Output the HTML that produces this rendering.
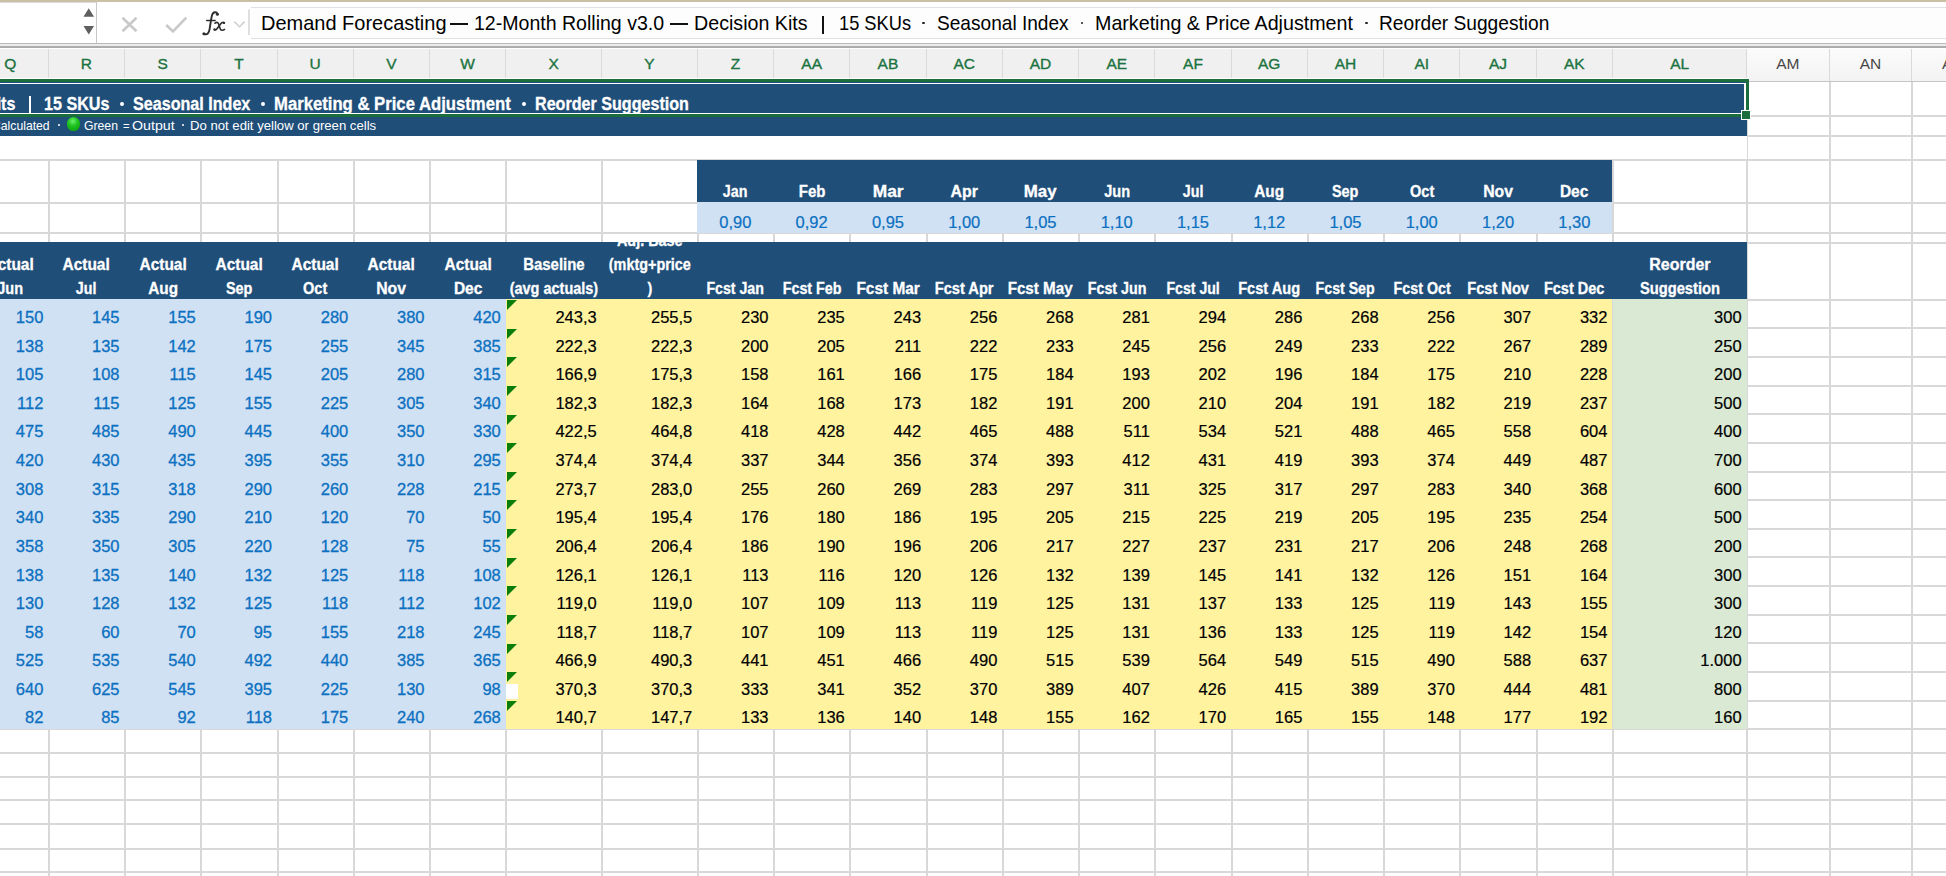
<!DOCTYPE html>
<html><head><meta charset="utf-8"><title>Demand Forecasting</title>
<style>
html,body{margin:0;padding:0;background:#fff;width:1946px;height:876px;overflow:hidden}
#root{position:absolute;left:0;top:0;width:1946px;height:876px;overflow:hidden;font-family:'Liberation Sans', sans-serif}
#root div{position:absolute;box-sizing:border-box}
.t{white-space:nowrap;overflow:visible}
#grid{position:absolute;left:0;top:0;width:1946px;height:876px;overflow:hidden}
</style></head><body><div id="root">
<div id="grid">
<div style="left:47.80px;top:81.50px;width:2.00px;height:794.50px;background:#d8d8d8;"></div>
<div style="left:124.05px;top:81.50px;width:2.00px;height:794.50px;background:#d8d8d8;"></div>
<div style="left:200.30px;top:81.50px;width:2.00px;height:794.50px;background:#d8d8d8;"></div>
<div style="left:276.55px;top:81.50px;width:2.00px;height:794.50px;background:#d8d8d8;"></div>
<div style="left:352.80px;top:81.50px;width:2.00px;height:794.50px;background:#d8d8d8;"></div>
<div style="left:429.05px;top:81.50px;width:2.00px;height:794.50px;background:#d8d8d8;"></div>
<div style="left:505.30px;top:81.50px;width:2.00px;height:794.50px;background:#d8d8d8;"></div>
<div style="left:601.20px;top:81.50px;width:2.00px;height:794.50px;background:#d8d8d8;"></div>
<div style="left:696.80px;top:81.50px;width:2.00px;height:794.50px;background:#d8d8d8;"></div>
<div style="left:773.06px;top:81.50px;width:2.00px;height:794.50px;background:#d8d8d8;"></div>
<div style="left:849.32px;top:81.50px;width:2.00px;height:794.50px;background:#d8d8d8;"></div>
<div style="left:925.58px;top:81.50px;width:2.00px;height:794.50px;background:#d8d8d8;"></div>
<div style="left:1001.84px;top:81.50px;width:2.00px;height:794.50px;background:#d8d8d8;"></div>
<div style="left:1078.10px;top:81.50px;width:2.00px;height:794.50px;background:#d8d8d8;"></div>
<div style="left:1154.36px;top:81.50px;width:2.00px;height:794.50px;background:#d8d8d8;"></div>
<div style="left:1230.62px;top:81.50px;width:2.00px;height:794.50px;background:#d8d8d8;"></div>
<div style="left:1306.88px;top:81.50px;width:2.00px;height:794.50px;background:#d8d8d8;"></div>
<div style="left:1383.14px;top:81.50px;width:2.00px;height:794.50px;background:#d8d8d8;"></div>
<div style="left:1459.40px;top:81.50px;width:2.00px;height:794.50px;background:#d8d8d8;"></div>
<div style="left:1535.66px;top:81.50px;width:2.00px;height:794.50px;background:#d8d8d8;"></div>
<div style="left:1611.92px;top:81.50px;width:2.00px;height:794.50px;background:#d8d8d8;"></div>
<div style="left:1746.10px;top:81.50px;width:2.00px;height:794.50px;background:#d8d8d8;"></div>
<div style="left:1828.70px;top:81.50px;width:2.00px;height:794.50px;background:#d8d8d8;"></div>
<div style="left:1911.30px;top:81.50px;width:2.00px;height:794.50px;background:#d8d8d8;"></div>
<div style="left:1993.90px;top:81.50px;width:2.00px;height:794.50px;background:#d8d8d8;"></div>
<div style="left:0.00px;top:114.60px;width:1946.00px;height:2.00px;background:#d8d8d8;"></div>
<div style="left:0.00px;top:135.40px;width:1946.00px;height:2.00px;background:#d8d8d8;"></div>
<div style="left:0.00px;top:158.70px;width:1946.00px;height:2.00px;background:#d8d8d8;"></div>
<div style="left:0.00px;top:201.90px;width:1946.00px;height:2.00px;background:#d8d8d8;"></div>
<div style="left:0.00px;top:232.10px;width:1946.00px;height:2.00px;background:#d8d8d8;"></div>
<div style="left:0.00px;top:241.70px;width:1946.00px;height:2.00px;background:#d8d8d8;"></div>
<div style="left:0.00px;top:298.80px;width:1946.00px;height:2.00px;background:#d8d8d8;"></div>
<div style="left:0.00px;top:327.40px;width:1946.00px;height:2.00px;background:#d8d8d8;"></div>
<div style="left:0.00px;top:356.03px;width:1946.00px;height:2.00px;background:#d8d8d8;"></div>
<div style="left:0.00px;top:384.66px;width:1946.00px;height:2.00px;background:#d8d8d8;"></div>
<div style="left:0.00px;top:413.29px;width:1946.00px;height:2.00px;background:#d8d8d8;"></div>
<div style="left:0.00px;top:441.92px;width:1946.00px;height:2.00px;background:#d8d8d8;"></div>
<div style="left:0.00px;top:470.55px;width:1946.00px;height:2.00px;background:#d8d8d8;"></div>
<div style="left:0.00px;top:499.18px;width:1946.00px;height:2.00px;background:#d8d8d8;"></div>
<div style="left:0.00px;top:527.81px;width:1946.00px;height:2.00px;background:#d8d8d8;"></div>
<div style="left:0.00px;top:556.44px;width:1946.00px;height:2.00px;background:#d8d8d8;"></div>
<div style="left:0.00px;top:585.07px;width:1946.00px;height:2.00px;background:#d8d8d8;"></div>
<div style="left:0.00px;top:613.70px;width:1946.00px;height:2.00px;background:#d8d8d8;"></div>
<div style="left:0.00px;top:642.33px;width:1946.00px;height:2.00px;background:#d8d8d8;"></div>
<div style="left:0.00px;top:670.96px;width:1946.00px;height:2.00px;background:#d8d8d8;"></div>
<div style="left:0.00px;top:699.59px;width:1946.00px;height:2.00px;background:#d8d8d8;"></div>
<div style="left:0.00px;top:728.40px;width:1946.00px;height:2.00px;background:#d8d8d8;"></div>
<div style="left:0.00px;top:751.90px;width:1946.00px;height:2.00px;background:#d8d8d8;"></div>
<div style="left:0.00px;top:775.50px;width:1946.00px;height:2.00px;background:#d8d8d8;"></div>
<div style="left:0.00px;top:799.40px;width:1946.00px;height:2.00px;background:#d8d8d8;"></div>
<div style="left:0.00px;top:823.30px;width:1946.00px;height:2.00px;background:#d8d8d8;"></div>
<div style="left:0.00px;top:847.50px;width:1946.00px;height:2.00px;background:#d8d8d8;"></div>
<div style="left:0.00px;top:870.80px;width:1946.00px;height:2.00px;background:#d8d8d8;"></div>
<div style="left:-27.95px;top:81.50px;width:1774.55px;height:54.80px;background:#1f4e79;"></div>
<div style="left:-27.95px;top:136.30px;width:1774.55px;height:23.20px;background:#ffffff;"></div>
<div style="left:697.30px;top:159.50px;width:915.12px;height:42.90px;background:#1f4e79;"></div>
<div style="left:697.30px;top:202.40px;width:915.12px;height:30.30px;background:#d0e1f3;"></div>
<div style="left:-27.95px;top:241.80px;width:1774.55px;height:57.00px;background:#1f4e79;"></div>
<div style="left:-27.95px;top:298.80px;width:533.75px;height:430.70px;background:#d0e1f3;"></div>
<div style="left:505.80px;top:298.80px;width:1106.62px;height:430.70px;background:#fff3a0;"></div>
<div style="left:1612.70px;top:298.80px;width:133.90px;height:430.70px;background:#d9e9d3;"></div>
<div style="left:28.90px;top:96.30px;width:2.20px;height:16.90px;background:#fff;"></div>
<div style="left:119.80px;top:101.8px;width:3.8px;height:3.8px;border-radius:50%;background:#fff"></div>
<div style="left:261.10px;top:101.8px;width:3.8px;height:3.8px;border-radius:50%;background:#fff"></div>
<div style="left:521.80px;top:101.8px;width:3.8px;height:3.8px;border-radius:50%;background:#fff"></div>
<div style="left:57.50px;top:124.1px;width:2.2px;height:2.2px;border-radius:50%;background:#fff"></div>
<div style="left:182.00px;top:124.1px;width:2.2px;height:2.2px;border-radius:50%;background:#fff"></div>
<div style="left:66.9px;top:117.4px;width:13.6px;height:13.2px;border-radius:50%;background:radial-gradient(circle at 45% 30%, #6cf06c 0%, #1fc21f 40%, #0a9a0a 100%)"></div>
<div class="t" style="left:657.30px;width:156.26px;text-align:center;top:176.56px;line-height:30px;font-size:16px;color:#fff;font-weight:bold;-webkit-text-stroke:0.3px #fff;transform:scaleX(0.8919);transform-origin:50% 0;">Jan</div>
<div class="t" style="left:657.30px;width:156.26px;text-align:center;top:206.78px;line-height:30px;font-size:16.5px;color:#0b70c1;-webkit-text-stroke:0.2px #0b70c1;">0,90</div>
<div class="t" style="left:733.56px;width:156.26px;text-align:center;top:176.56px;line-height:30px;font-size:16px;color:#fff;font-weight:bold;-webkit-text-stroke:0.3px #fff;transform:scaleX(0.9396);transform-origin:50% 0;">Feb</div>
<div class="t" style="left:733.56px;width:156.26px;text-align:center;top:206.78px;line-height:30px;font-size:16.5px;color:#0b70c1;-webkit-text-stroke:0.2px #0b70c1;">0,92</div>
<div class="t" style="left:809.82px;width:156.26px;text-align:center;top:176.56px;line-height:30px;font-size:16px;color:#fff;font-weight:bold;-webkit-text-stroke:0.3px #fff;transform:scaleX(1.0835);transform-origin:50% 0;">Mar</div>
<div class="t" style="left:809.82px;width:156.26px;text-align:center;top:206.78px;line-height:30px;font-size:16.5px;color:#0b70c1;-webkit-text-stroke:0.2px #0b70c1;">0,95</div>
<div class="t" style="left:886.08px;width:156.26px;text-align:center;top:176.56px;line-height:30px;font-size:16px;color:#fff;font-weight:bold;-webkit-text-stroke:0.3px #fff;transform:scaleX(0.9953);transform-origin:50% 0;">Apr</div>
<div class="t" style="left:886.08px;width:156.26px;text-align:center;top:206.78px;line-height:30px;font-size:16.5px;color:#0b70c1;-webkit-text-stroke:0.2px #0b70c1;">1,00</div>
<div class="t" style="left:962.34px;width:156.26px;text-align:center;top:176.56px;line-height:30px;font-size:16px;color:#fff;font-weight:bold;-webkit-text-stroke:0.3px #fff;transform:scaleX(1.0554);transform-origin:50% 0;">May</div>
<div class="t" style="left:962.34px;width:156.26px;text-align:center;top:206.78px;line-height:30px;font-size:16.5px;color:#0b70c1;-webkit-text-stroke:0.2px #0b70c1;">1,05</div>
<div class="t" style="left:1038.60px;width:156.26px;text-align:center;top:176.56px;line-height:30px;font-size:16px;color:#fff;font-weight:bold;-webkit-text-stroke:0.3px #fff;transform:scaleX(0.9071);transform-origin:50% 0;">Jun</div>
<div class="t" style="left:1038.60px;width:156.26px;text-align:center;top:206.78px;line-height:30px;font-size:16.5px;color:#0b70c1;-webkit-text-stroke:0.2px #0b70c1;">1,10</div>
<div class="t" style="left:1114.86px;width:156.26px;text-align:center;top:176.56px;line-height:30px;font-size:16px;color:#fff;font-weight:bold;-webkit-text-stroke:0.3px #fff;transform:scaleX(0.8866);transform-origin:50% 0;">Jul</div>
<div class="t" style="left:1114.86px;width:156.26px;text-align:center;top:206.78px;line-height:30px;font-size:16.5px;color:#0b70c1;-webkit-text-stroke:0.2px #0b70c1;">1,15</div>
<div class="t" style="left:1191.12px;width:156.26px;text-align:center;top:176.56px;line-height:30px;font-size:16px;color:#fff;font-weight:bold;-webkit-text-stroke:0.3px #fff;transform:scaleX(0.9562);transform-origin:50% 0;">Aug</div>
<div class="t" style="left:1191.12px;width:156.26px;text-align:center;top:206.78px;line-height:30px;font-size:16.5px;color:#0b70c1;-webkit-text-stroke:0.2px #0b70c1;">1,12</div>
<div class="t" style="left:1267.38px;width:156.26px;text-align:center;top:176.56px;line-height:30px;font-size:16px;color:#fff;font-weight:bold;-webkit-text-stroke:0.3px #fff;transform:scaleX(0.9029);transform-origin:50% 0;">Sep</div>
<div class="t" style="left:1267.38px;width:156.26px;text-align:center;top:206.78px;line-height:30px;font-size:16.5px;color:#0b70c1;-webkit-text-stroke:0.2px #0b70c1;">1,05</div>
<div class="t" style="left:1343.64px;width:156.26px;text-align:center;top:176.56px;line-height:30px;font-size:16px;color:#fff;font-weight:bold;-webkit-text-stroke:0.3px #fff;transform:scaleX(0.907);transform-origin:50% 0;">Oct</div>
<div class="t" style="left:1343.64px;width:156.26px;text-align:center;top:206.78px;line-height:30px;font-size:16.5px;color:#0b70c1;-webkit-text-stroke:0.2px #0b70c1;">1,00</div>
<div class="t" style="left:1419.90px;width:156.26px;text-align:center;top:176.56px;line-height:30px;font-size:16px;color:#fff;font-weight:bold;-webkit-text-stroke:0.3px #fff;transform:scaleX(0.9854);transform-origin:50% 0;">Nov</div>
<div class="t" style="left:1419.90px;width:156.26px;text-align:center;top:206.78px;line-height:30px;font-size:16.5px;color:#0b70c1;-webkit-text-stroke:0.2px #0b70c1;">1,20</div>
<div class="t" style="left:1496.16px;width:156.26px;text-align:center;top:176.56px;line-height:30px;font-size:16px;color:#fff;font-weight:bold;-webkit-text-stroke:0.3px #fff;transform:scaleX(0.97);transform-origin:50% 0;">Dec</div>
<div class="t" style="left:1496.16px;width:156.26px;text-align:center;top:206.78px;line-height:30px;font-size:16.5px;color:#0b70c1;-webkit-text-stroke:0.2px #0b70c1;">1,30</div>
<div style="left:0;top:241.8px;width:1946px;height:57px;overflow:hidden"><div class="t" style="left:-67.95px;width:156.25px;text-align:center;top:7.76px;line-height:30px;font-size:16px;color:#fff;font-weight:bold;-webkit-text-stroke:0.3px #fff;transform:scaleX(0.9659);transform-origin:50% 0;">Actual</div><div class="t" style="left:-67.95px;width:156.25px;text-align:center;top:31.76px;line-height:30px;font-size:16px;color:#fff;font-weight:bold;-webkit-text-stroke:0.3px #fff;transform:scaleX(0.9071);transform-origin:50% 0;">Jun</div><div class="t" style="left:8.30px;width:156.25px;text-align:center;top:7.76px;line-height:30px;font-size:16px;color:#fff;font-weight:bold;-webkit-text-stroke:0.3px #fff;transform:scaleX(0.9659);transform-origin:50% 0;">Actual</div><div class="t" style="left:8.30px;width:156.25px;text-align:center;top:31.76px;line-height:30px;font-size:16px;color:#fff;font-weight:bold;-webkit-text-stroke:0.3px #fff;transform:scaleX(0.8866);transform-origin:50% 0;">Jul</div><div class="t" style="left:84.55px;width:156.25px;text-align:center;top:7.76px;line-height:30px;font-size:16px;color:#fff;font-weight:bold;-webkit-text-stroke:0.3px #fff;transform:scaleX(0.9659);transform-origin:50% 0;">Actual</div><div class="t" style="left:84.55px;width:156.25px;text-align:center;top:31.76px;line-height:30px;font-size:16px;color:#fff;font-weight:bold;-webkit-text-stroke:0.3px #fff;transform:scaleX(0.9562);transform-origin:50% 0;">Aug</div><div class="t" style="left:160.80px;width:156.25px;text-align:center;top:7.76px;line-height:30px;font-size:16px;color:#fff;font-weight:bold;-webkit-text-stroke:0.3px #fff;transform:scaleX(0.9659);transform-origin:50% 0;">Actual</div><div class="t" style="left:160.80px;width:156.25px;text-align:center;top:31.76px;line-height:30px;font-size:16px;color:#fff;font-weight:bold;-webkit-text-stroke:0.3px #fff;transform:scaleX(0.9029);transform-origin:50% 0;">Sep</div><div class="t" style="left:237.05px;width:156.25px;text-align:center;top:7.76px;line-height:30px;font-size:16px;color:#fff;font-weight:bold;-webkit-text-stroke:0.3px #fff;transform:scaleX(0.9659);transform-origin:50% 0;">Actual</div><div class="t" style="left:237.05px;width:156.25px;text-align:center;top:31.76px;line-height:30px;font-size:16px;color:#fff;font-weight:bold;-webkit-text-stroke:0.3px #fff;transform:scaleX(0.907);transform-origin:50% 0;">Oct</div><div class="t" style="left:313.30px;width:156.25px;text-align:center;top:7.76px;line-height:30px;font-size:16px;color:#fff;font-weight:bold;-webkit-text-stroke:0.3px #fff;transform:scaleX(0.9659);transform-origin:50% 0;">Actual</div><div class="t" style="left:313.30px;width:156.25px;text-align:center;top:31.76px;line-height:30px;font-size:16px;color:#fff;font-weight:bold;-webkit-text-stroke:0.3px #fff;transform:scaleX(0.9854);transform-origin:50% 0;">Nov</div><div class="t" style="left:389.55px;width:156.25px;text-align:center;top:7.76px;line-height:30px;font-size:16px;color:#fff;font-weight:bold;-webkit-text-stroke:0.3px #fff;transform:scaleX(0.9659);transform-origin:50% 0;">Actual</div><div class="t" style="left:389.55px;width:156.25px;text-align:center;top:31.76px;line-height:30px;font-size:16px;color:#fff;font-weight:bold;-webkit-text-stroke:0.3px #fff;transform:scaleX(0.97);transform-origin:50% 0;">Dec</div><div class="t" style="left:465.80px;width:175.90px;text-align:center;top:7.76px;line-height:30px;font-size:16px;color:#fff;font-weight:bold;-webkit-text-stroke:0.3px #fff;transform:scaleX(0.9335);transform-origin:50% 0;">Baseline</div><div class="t" style="left:465.80px;width:175.90px;text-align:center;top:31.76px;line-height:30px;font-size:16px;color:#fff;font-weight:bold;-webkit-text-stroke:0.3px #fff;transform:scaleX(0.9048);transform-origin:50% 0;">(avg actuals)</div><div class="t" style="left:561.70px;width:175.60px;text-align:center;top:-16.24px;line-height:30px;font-size:16px;color:#fff;font-weight:bold;-webkit-text-stroke:0.3px #fff;transform:scaleX(0.9);transform-origin:50% 0;">Adj. Base</div><div class="t" style="left:561.70px;width:175.60px;text-align:center;top:7.76px;line-height:30px;font-size:16px;color:#fff;font-weight:bold;-webkit-text-stroke:0.3px #fff;transform:scaleX(0.9);transform-origin:50% 0;">(mktg+price</div><div class="t" style="left:561.70px;width:175.60px;text-align:center;top:31.76px;line-height:30px;font-size:16px;color:#fff;font-weight:bold;-webkit-text-stroke:0.3px #fff;transform:scaleX(0.9);transform-origin:50% 0;">)</div><div class="t" style="left:657.30px;width:156.26px;text-align:center;top:31.76px;line-height:30px;font-size:16px;color:#fff;font-weight:bold;-webkit-text-stroke:0.3px #fff;transform:scaleX(0.8853);transform-origin:50% 0;">Fcst Jan</div><div class="t" style="left:733.56px;width:156.26px;text-align:center;top:31.76px;line-height:30px;font-size:16px;color:#fff;font-weight:bold;-webkit-text-stroke:0.3px #fff;transform:scaleX(0.8952);transform-origin:50% 0;">Fcst Feb</div><div class="t" style="left:809.82px;width:156.26px;text-align:center;top:31.76px;line-height:30px;font-size:16px;color:#fff;font-weight:bold;-webkit-text-stroke:0.3px #fff;transform:scaleX(0.9633);transform-origin:50% 0;">Fcst Mar</div><div class="t" style="left:886.08px;width:156.26px;text-align:center;top:31.76px;line-height:30px;font-size:16px;color:#fff;font-weight:bold;-webkit-text-stroke:0.3px #fff;transform:scaleX(0.9156);transform-origin:50% 0;">Fcst Apr</div><div class="t" style="left:962.34px;width:156.26px;text-align:center;top:31.76px;line-height:30px;font-size:16px;color:#fff;font-weight:bold;-webkit-text-stroke:0.3px #fff;transform:scaleX(0.9486);transform-origin:50% 0;">Fcst May</div><div class="t" style="left:1038.60px;width:156.26px;text-align:center;top:31.76px;line-height:30px;font-size:16px;color:#fff;font-weight:bold;-webkit-text-stroke:0.3px #fff;transform:scaleX(0.8935);transform-origin:50% 0;">Fcst Jun</div><div class="t" style="left:1114.86px;width:156.26px;text-align:center;top:31.76px;line-height:30px;font-size:16px;color:#fff;font-weight:bold;-webkit-text-stroke:0.3px #fff;transform:scaleX(0.8811);transform-origin:50% 0;">Fcst Jul</div><div class="t" style="left:1191.12px;width:156.26px;text-align:center;top:31.76px;line-height:30px;font-size:16px;color:#fff;font-weight:bold;-webkit-text-stroke:0.3px #fff;transform:scaleX(0.9119);transform-origin:50% 0;">Fcst Aug</div><div class="t" style="left:1267.38px;width:156.26px;text-align:center;top:31.76px;line-height:30px;font-size:16px;color:#fff;font-weight:bold;-webkit-text-stroke:0.3px #fff;transform:scaleX(0.886);transform-origin:50% 0;">Fcst Sep</div><div class="t" style="left:1343.64px;width:156.26px;text-align:center;top:31.76px;line-height:30px;font-size:16px;color:#fff;font-weight:bold;-webkit-text-stroke:0.3px #fff;transform:scaleX(0.8919);transform-origin:50% 0;">Fcst Oct</div><div class="t" style="left:1419.90px;width:156.26px;text-align:center;top:31.76px;line-height:30px;font-size:16px;color:#fff;font-weight:bold;-webkit-text-stroke:0.3px #fff;transform:scaleX(0.9134);transform-origin:50% 0;">Fcst Nov</div><div class="t" style="left:1496.16px;width:156.26px;text-align:center;top:31.76px;line-height:30px;font-size:16px;color:#fff;font-weight:bold;-webkit-text-stroke:0.3px #fff;transform:scaleX(0.9058);transform-origin:50% 0;">Fcst Dec</div><div class="t" style="left:1572.70px;width:213.90px;text-align:center;top:7.76px;line-height:30px;font-size:16px;color:#fff;font-weight:bold;-webkit-text-stroke:0.3px #fff;transform:scaleX(0.9979);transform-origin:50% 0;">Reorder</div><div class="t" style="left:1572.70px;width:213.90px;text-align:center;top:31.76px;line-height:30px;font-size:16px;color:#fff;font-weight:bold;-webkit-text-stroke:0.3px #fff;transform:scaleX(0.9197);transform-origin:50% 0;">Suggestion</div></div>
<div class="t" style="left:-27.95px;width:71.25px;text-align:right;top:301.91px;line-height:30px;font-size:16.5px;color:#0b70c1;-webkit-text-stroke:0.3px #0b70c1;">150</div>
<div class="t" style="left:48.30px;width:71.25px;text-align:right;top:301.91px;line-height:30px;font-size:16.5px;color:#0b70c1;-webkit-text-stroke:0.3px #0b70c1;">145</div>
<div class="t" style="left:124.55px;width:71.25px;text-align:right;top:301.91px;line-height:30px;font-size:16.5px;color:#0b70c1;-webkit-text-stroke:0.3px #0b70c1;">155</div>
<div class="t" style="left:200.80px;width:71.25px;text-align:right;top:301.91px;line-height:30px;font-size:16.5px;color:#0b70c1;-webkit-text-stroke:0.3px #0b70c1;">190</div>
<div class="t" style="left:277.05px;width:71.25px;text-align:right;top:301.91px;line-height:30px;font-size:16.5px;color:#0b70c1;-webkit-text-stroke:0.3px #0b70c1;">280</div>
<div class="t" style="left:353.30px;width:71.25px;text-align:right;top:301.91px;line-height:30px;font-size:16.5px;color:#0b70c1;-webkit-text-stroke:0.3px #0b70c1;">380</div>
<div class="t" style="left:429.55px;width:71.25px;text-align:right;top:301.91px;line-height:30px;font-size:16.5px;color:#0b70c1;-webkit-text-stroke:0.3px #0b70c1;">420</div>
<div class="t" style="left:505.80px;width:90.90px;text-align:right;top:301.91px;line-height:30px;font-size:16.5px;color:#000;-webkit-text-stroke:0.2px #000;">243,3</div>
<div class="t" style="left:601.70px;width:90.60px;text-align:right;top:301.91px;line-height:30px;font-size:16.5px;color:#000;-webkit-text-stroke:0.2px #000;">255,5</div>
<div class="t" style="left:697.30px;width:71.26px;text-align:right;top:301.91px;line-height:30px;font-size:16.5px;color:#000;-webkit-text-stroke:0.2px #000;">230</div>
<div class="t" style="left:773.56px;width:71.26px;text-align:right;top:301.91px;line-height:30px;font-size:16.5px;color:#000;-webkit-text-stroke:0.2px #000;">235</div>
<div class="t" style="left:849.82px;width:71.26px;text-align:right;top:301.91px;line-height:30px;font-size:16.5px;color:#000;-webkit-text-stroke:0.2px #000;">243</div>
<div class="t" style="left:926.08px;width:71.26px;text-align:right;top:301.91px;line-height:30px;font-size:16.5px;color:#000;-webkit-text-stroke:0.2px #000;">256</div>
<div class="t" style="left:1002.34px;width:71.26px;text-align:right;top:301.91px;line-height:30px;font-size:16.5px;color:#000;-webkit-text-stroke:0.2px #000;">268</div>
<div class="t" style="left:1078.60px;width:71.26px;text-align:right;top:301.91px;line-height:30px;font-size:16.5px;color:#000;-webkit-text-stroke:0.2px #000;">281</div>
<div class="t" style="left:1154.86px;width:71.26px;text-align:right;top:301.91px;line-height:30px;font-size:16.5px;color:#000;-webkit-text-stroke:0.2px #000;">294</div>
<div class="t" style="left:1231.12px;width:71.26px;text-align:right;top:301.91px;line-height:30px;font-size:16.5px;color:#000;-webkit-text-stroke:0.2px #000;">286</div>
<div class="t" style="left:1307.38px;width:71.26px;text-align:right;top:301.91px;line-height:30px;font-size:16.5px;color:#000;-webkit-text-stroke:0.2px #000;">268</div>
<div class="t" style="left:1383.64px;width:71.26px;text-align:right;top:301.91px;line-height:30px;font-size:16.5px;color:#000;-webkit-text-stroke:0.2px #000;">256</div>
<div class="t" style="left:1459.90px;width:71.26px;text-align:right;top:301.91px;line-height:30px;font-size:16.5px;color:#000;-webkit-text-stroke:0.2px #000;">307</div>
<div class="t" style="left:1536.16px;width:71.26px;text-align:right;top:301.91px;line-height:30px;font-size:16.5px;color:#000;-webkit-text-stroke:0.2px #000;">332</div>
<div class="t" style="left:1612.70px;width:128.90px;text-align:right;top:301.91px;line-height:30px;font-size:16.5px;color:#000;-webkit-text-stroke:0.2px #000;">300</div>
<div style="left:507.10px;top:300.00px;width:0;height:0;border-top:10px solid #0a7d0a;border-right:10px solid transparent"></div>
<div class="t" style="left:-27.95px;width:71.25px;text-align:right;top:330.54px;line-height:30px;font-size:16.5px;color:#0b70c1;-webkit-text-stroke:0.3px #0b70c1;">138</div>
<div class="t" style="left:48.30px;width:71.25px;text-align:right;top:330.54px;line-height:30px;font-size:16.5px;color:#0b70c1;-webkit-text-stroke:0.3px #0b70c1;">135</div>
<div class="t" style="left:124.55px;width:71.25px;text-align:right;top:330.54px;line-height:30px;font-size:16.5px;color:#0b70c1;-webkit-text-stroke:0.3px #0b70c1;">142</div>
<div class="t" style="left:200.80px;width:71.25px;text-align:right;top:330.54px;line-height:30px;font-size:16.5px;color:#0b70c1;-webkit-text-stroke:0.3px #0b70c1;">175</div>
<div class="t" style="left:277.05px;width:71.25px;text-align:right;top:330.54px;line-height:30px;font-size:16.5px;color:#0b70c1;-webkit-text-stroke:0.3px #0b70c1;">255</div>
<div class="t" style="left:353.30px;width:71.25px;text-align:right;top:330.54px;line-height:30px;font-size:16.5px;color:#0b70c1;-webkit-text-stroke:0.3px #0b70c1;">345</div>
<div class="t" style="left:429.55px;width:71.25px;text-align:right;top:330.54px;line-height:30px;font-size:16.5px;color:#0b70c1;-webkit-text-stroke:0.3px #0b70c1;">385</div>
<div class="t" style="left:505.80px;width:90.90px;text-align:right;top:330.54px;line-height:30px;font-size:16.5px;color:#000;-webkit-text-stroke:0.2px #000;">222,3</div>
<div class="t" style="left:601.70px;width:90.60px;text-align:right;top:330.54px;line-height:30px;font-size:16.5px;color:#000;-webkit-text-stroke:0.2px #000;">222,3</div>
<div class="t" style="left:697.30px;width:71.26px;text-align:right;top:330.54px;line-height:30px;font-size:16.5px;color:#000;-webkit-text-stroke:0.2px #000;">200</div>
<div class="t" style="left:773.56px;width:71.26px;text-align:right;top:330.54px;line-height:30px;font-size:16.5px;color:#000;-webkit-text-stroke:0.2px #000;">205</div>
<div class="t" style="left:849.82px;width:71.26px;text-align:right;top:330.54px;line-height:30px;font-size:16.5px;color:#000;-webkit-text-stroke:0.2px #000;">211</div>
<div class="t" style="left:926.08px;width:71.26px;text-align:right;top:330.54px;line-height:30px;font-size:16.5px;color:#000;-webkit-text-stroke:0.2px #000;">222</div>
<div class="t" style="left:1002.34px;width:71.26px;text-align:right;top:330.54px;line-height:30px;font-size:16.5px;color:#000;-webkit-text-stroke:0.2px #000;">233</div>
<div class="t" style="left:1078.60px;width:71.26px;text-align:right;top:330.54px;line-height:30px;font-size:16.5px;color:#000;-webkit-text-stroke:0.2px #000;">245</div>
<div class="t" style="left:1154.86px;width:71.26px;text-align:right;top:330.54px;line-height:30px;font-size:16.5px;color:#000;-webkit-text-stroke:0.2px #000;">256</div>
<div class="t" style="left:1231.12px;width:71.26px;text-align:right;top:330.54px;line-height:30px;font-size:16.5px;color:#000;-webkit-text-stroke:0.2px #000;">249</div>
<div class="t" style="left:1307.38px;width:71.26px;text-align:right;top:330.54px;line-height:30px;font-size:16.5px;color:#000;-webkit-text-stroke:0.2px #000;">233</div>
<div class="t" style="left:1383.64px;width:71.26px;text-align:right;top:330.54px;line-height:30px;font-size:16.5px;color:#000;-webkit-text-stroke:0.2px #000;">222</div>
<div class="t" style="left:1459.90px;width:71.26px;text-align:right;top:330.54px;line-height:30px;font-size:16.5px;color:#000;-webkit-text-stroke:0.2px #000;">267</div>
<div class="t" style="left:1536.16px;width:71.26px;text-align:right;top:330.54px;line-height:30px;font-size:16.5px;color:#000;-webkit-text-stroke:0.2px #000;">289</div>
<div class="t" style="left:1612.70px;width:128.90px;text-align:right;top:330.54px;line-height:30px;font-size:16.5px;color:#000;-webkit-text-stroke:0.2px #000;">250</div>
<div style="left:507.10px;top:328.63px;width:0;height:0;border-top:10px solid #0a7d0a;border-right:10px solid transparent"></div>
<div class="t" style="left:-27.95px;width:71.25px;text-align:right;top:359.17px;line-height:30px;font-size:16.5px;color:#0b70c1;-webkit-text-stroke:0.3px #0b70c1;">105</div>
<div class="t" style="left:48.30px;width:71.25px;text-align:right;top:359.17px;line-height:30px;font-size:16.5px;color:#0b70c1;-webkit-text-stroke:0.3px #0b70c1;">108</div>
<div class="t" style="left:124.55px;width:71.25px;text-align:right;top:359.17px;line-height:30px;font-size:16.5px;color:#0b70c1;-webkit-text-stroke:0.3px #0b70c1;">115</div>
<div class="t" style="left:200.80px;width:71.25px;text-align:right;top:359.17px;line-height:30px;font-size:16.5px;color:#0b70c1;-webkit-text-stroke:0.3px #0b70c1;">145</div>
<div class="t" style="left:277.05px;width:71.25px;text-align:right;top:359.17px;line-height:30px;font-size:16.5px;color:#0b70c1;-webkit-text-stroke:0.3px #0b70c1;">205</div>
<div class="t" style="left:353.30px;width:71.25px;text-align:right;top:359.17px;line-height:30px;font-size:16.5px;color:#0b70c1;-webkit-text-stroke:0.3px #0b70c1;">280</div>
<div class="t" style="left:429.55px;width:71.25px;text-align:right;top:359.17px;line-height:30px;font-size:16.5px;color:#0b70c1;-webkit-text-stroke:0.3px #0b70c1;">315</div>
<div class="t" style="left:505.80px;width:90.90px;text-align:right;top:359.17px;line-height:30px;font-size:16.5px;color:#000;-webkit-text-stroke:0.2px #000;">166,9</div>
<div class="t" style="left:601.70px;width:90.60px;text-align:right;top:359.17px;line-height:30px;font-size:16.5px;color:#000;-webkit-text-stroke:0.2px #000;">175,3</div>
<div class="t" style="left:697.30px;width:71.26px;text-align:right;top:359.17px;line-height:30px;font-size:16.5px;color:#000;-webkit-text-stroke:0.2px #000;">158</div>
<div class="t" style="left:773.56px;width:71.26px;text-align:right;top:359.17px;line-height:30px;font-size:16.5px;color:#000;-webkit-text-stroke:0.2px #000;">161</div>
<div class="t" style="left:849.82px;width:71.26px;text-align:right;top:359.17px;line-height:30px;font-size:16.5px;color:#000;-webkit-text-stroke:0.2px #000;">166</div>
<div class="t" style="left:926.08px;width:71.26px;text-align:right;top:359.17px;line-height:30px;font-size:16.5px;color:#000;-webkit-text-stroke:0.2px #000;">175</div>
<div class="t" style="left:1002.34px;width:71.26px;text-align:right;top:359.17px;line-height:30px;font-size:16.5px;color:#000;-webkit-text-stroke:0.2px #000;">184</div>
<div class="t" style="left:1078.60px;width:71.26px;text-align:right;top:359.17px;line-height:30px;font-size:16.5px;color:#000;-webkit-text-stroke:0.2px #000;">193</div>
<div class="t" style="left:1154.86px;width:71.26px;text-align:right;top:359.17px;line-height:30px;font-size:16.5px;color:#000;-webkit-text-stroke:0.2px #000;">202</div>
<div class="t" style="left:1231.12px;width:71.26px;text-align:right;top:359.17px;line-height:30px;font-size:16.5px;color:#000;-webkit-text-stroke:0.2px #000;">196</div>
<div class="t" style="left:1307.38px;width:71.26px;text-align:right;top:359.17px;line-height:30px;font-size:16.5px;color:#000;-webkit-text-stroke:0.2px #000;">184</div>
<div class="t" style="left:1383.64px;width:71.26px;text-align:right;top:359.17px;line-height:30px;font-size:16.5px;color:#000;-webkit-text-stroke:0.2px #000;">175</div>
<div class="t" style="left:1459.90px;width:71.26px;text-align:right;top:359.17px;line-height:30px;font-size:16.5px;color:#000;-webkit-text-stroke:0.2px #000;">210</div>
<div class="t" style="left:1536.16px;width:71.26px;text-align:right;top:359.17px;line-height:30px;font-size:16.5px;color:#000;-webkit-text-stroke:0.2px #000;">228</div>
<div class="t" style="left:1612.70px;width:128.90px;text-align:right;top:359.17px;line-height:30px;font-size:16.5px;color:#000;-webkit-text-stroke:0.2px #000;">200</div>
<div style="left:507.10px;top:357.26px;width:0;height:0;border-top:10px solid #0a7d0a;border-right:10px solid transparent"></div>
<div class="t" style="left:-27.95px;width:71.25px;text-align:right;top:387.80px;line-height:30px;font-size:16.5px;color:#0b70c1;-webkit-text-stroke:0.3px #0b70c1;">112</div>
<div class="t" style="left:48.30px;width:71.25px;text-align:right;top:387.80px;line-height:30px;font-size:16.5px;color:#0b70c1;-webkit-text-stroke:0.3px #0b70c1;">115</div>
<div class="t" style="left:124.55px;width:71.25px;text-align:right;top:387.80px;line-height:30px;font-size:16.5px;color:#0b70c1;-webkit-text-stroke:0.3px #0b70c1;">125</div>
<div class="t" style="left:200.80px;width:71.25px;text-align:right;top:387.80px;line-height:30px;font-size:16.5px;color:#0b70c1;-webkit-text-stroke:0.3px #0b70c1;">155</div>
<div class="t" style="left:277.05px;width:71.25px;text-align:right;top:387.80px;line-height:30px;font-size:16.5px;color:#0b70c1;-webkit-text-stroke:0.3px #0b70c1;">225</div>
<div class="t" style="left:353.30px;width:71.25px;text-align:right;top:387.80px;line-height:30px;font-size:16.5px;color:#0b70c1;-webkit-text-stroke:0.3px #0b70c1;">305</div>
<div class="t" style="left:429.55px;width:71.25px;text-align:right;top:387.80px;line-height:30px;font-size:16.5px;color:#0b70c1;-webkit-text-stroke:0.3px #0b70c1;">340</div>
<div class="t" style="left:505.80px;width:90.90px;text-align:right;top:387.80px;line-height:30px;font-size:16.5px;color:#000;-webkit-text-stroke:0.2px #000;">182,3</div>
<div class="t" style="left:601.70px;width:90.60px;text-align:right;top:387.80px;line-height:30px;font-size:16.5px;color:#000;-webkit-text-stroke:0.2px #000;">182,3</div>
<div class="t" style="left:697.30px;width:71.26px;text-align:right;top:387.80px;line-height:30px;font-size:16.5px;color:#000;-webkit-text-stroke:0.2px #000;">164</div>
<div class="t" style="left:773.56px;width:71.26px;text-align:right;top:387.80px;line-height:30px;font-size:16.5px;color:#000;-webkit-text-stroke:0.2px #000;">168</div>
<div class="t" style="left:849.82px;width:71.26px;text-align:right;top:387.80px;line-height:30px;font-size:16.5px;color:#000;-webkit-text-stroke:0.2px #000;">173</div>
<div class="t" style="left:926.08px;width:71.26px;text-align:right;top:387.80px;line-height:30px;font-size:16.5px;color:#000;-webkit-text-stroke:0.2px #000;">182</div>
<div class="t" style="left:1002.34px;width:71.26px;text-align:right;top:387.80px;line-height:30px;font-size:16.5px;color:#000;-webkit-text-stroke:0.2px #000;">191</div>
<div class="t" style="left:1078.60px;width:71.26px;text-align:right;top:387.80px;line-height:30px;font-size:16.5px;color:#000;-webkit-text-stroke:0.2px #000;">200</div>
<div class="t" style="left:1154.86px;width:71.26px;text-align:right;top:387.80px;line-height:30px;font-size:16.5px;color:#000;-webkit-text-stroke:0.2px #000;">210</div>
<div class="t" style="left:1231.12px;width:71.26px;text-align:right;top:387.80px;line-height:30px;font-size:16.5px;color:#000;-webkit-text-stroke:0.2px #000;">204</div>
<div class="t" style="left:1307.38px;width:71.26px;text-align:right;top:387.80px;line-height:30px;font-size:16.5px;color:#000;-webkit-text-stroke:0.2px #000;">191</div>
<div class="t" style="left:1383.64px;width:71.26px;text-align:right;top:387.80px;line-height:30px;font-size:16.5px;color:#000;-webkit-text-stroke:0.2px #000;">182</div>
<div class="t" style="left:1459.90px;width:71.26px;text-align:right;top:387.80px;line-height:30px;font-size:16.5px;color:#000;-webkit-text-stroke:0.2px #000;">219</div>
<div class="t" style="left:1536.16px;width:71.26px;text-align:right;top:387.80px;line-height:30px;font-size:16.5px;color:#000;-webkit-text-stroke:0.2px #000;">237</div>
<div class="t" style="left:1612.70px;width:128.90px;text-align:right;top:387.80px;line-height:30px;font-size:16.5px;color:#000;-webkit-text-stroke:0.2px #000;">500</div>
<div style="left:507.10px;top:385.89px;width:0;height:0;border-top:10px solid #0a7d0a;border-right:10px solid transparent"></div>
<div class="t" style="left:-27.95px;width:71.25px;text-align:right;top:416.43px;line-height:30px;font-size:16.5px;color:#0b70c1;-webkit-text-stroke:0.3px #0b70c1;">475</div>
<div class="t" style="left:48.30px;width:71.25px;text-align:right;top:416.43px;line-height:30px;font-size:16.5px;color:#0b70c1;-webkit-text-stroke:0.3px #0b70c1;">485</div>
<div class="t" style="left:124.55px;width:71.25px;text-align:right;top:416.43px;line-height:30px;font-size:16.5px;color:#0b70c1;-webkit-text-stroke:0.3px #0b70c1;">490</div>
<div class="t" style="left:200.80px;width:71.25px;text-align:right;top:416.43px;line-height:30px;font-size:16.5px;color:#0b70c1;-webkit-text-stroke:0.3px #0b70c1;">445</div>
<div class="t" style="left:277.05px;width:71.25px;text-align:right;top:416.43px;line-height:30px;font-size:16.5px;color:#0b70c1;-webkit-text-stroke:0.3px #0b70c1;">400</div>
<div class="t" style="left:353.30px;width:71.25px;text-align:right;top:416.43px;line-height:30px;font-size:16.5px;color:#0b70c1;-webkit-text-stroke:0.3px #0b70c1;">350</div>
<div class="t" style="left:429.55px;width:71.25px;text-align:right;top:416.43px;line-height:30px;font-size:16.5px;color:#0b70c1;-webkit-text-stroke:0.3px #0b70c1;">330</div>
<div class="t" style="left:505.80px;width:90.90px;text-align:right;top:416.43px;line-height:30px;font-size:16.5px;color:#000;-webkit-text-stroke:0.2px #000;">422,5</div>
<div class="t" style="left:601.70px;width:90.60px;text-align:right;top:416.43px;line-height:30px;font-size:16.5px;color:#000;-webkit-text-stroke:0.2px #000;">464,8</div>
<div class="t" style="left:697.30px;width:71.26px;text-align:right;top:416.43px;line-height:30px;font-size:16.5px;color:#000;-webkit-text-stroke:0.2px #000;">418</div>
<div class="t" style="left:773.56px;width:71.26px;text-align:right;top:416.43px;line-height:30px;font-size:16.5px;color:#000;-webkit-text-stroke:0.2px #000;">428</div>
<div class="t" style="left:849.82px;width:71.26px;text-align:right;top:416.43px;line-height:30px;font-size:16.5px;color:#000;-webkit-text-stroke:0.2px #000;">442</div>
<div class="t" style="left:926.08px;width:71.26px;text-align:right;top:416.43px;line-height:30px;font-size:16.5px;color:#000;-webkit-text-stroke:0.2px #000;">465</div>
<div class="t" style="left:1002.34px;width:71.26px;text-align:right;top:416.43px;line-height:30px;font-size:16.5px;color:#000;-webkit-text-stroke:0.2px #000;">488</div>
<div class="t" style="left:1078.60px;width:71.26px;text-align:right;top:416.43px;line-height:30px;font-size:16.5px;color:#000;-webkit-text-stroke:0.2px #000;">511</div>
<div class="t" style="left:1154.86px;width:71.26px;text-align:right;top:416.43px;line-height:30px;font-size:16.5px;color:#000;-webkit-text-stroke:0.2px #000;">534</div>
<div class="t" style="left:1231.12px;width:71.26px;text-align:right;top:416.43px;line-height:30px;font-size:16.5px;color:#000;-webkit-text-stroke:0.2px #000;">521</div>
<div class="t" style="left:1307.38px;width:71.26px;text-align:right;top:416.43px;line-height:30px;font-size:16.5px;color:#000;-webkit-text-stroke:0.2px #000;">488</div>
<div class="t" style="left:1383.64px;width:71.26px;text-align:right;top:416.43px;line-height:30px;font-size:16.5px;color:#000;-webkit-text-stroke:0.2px #000;">465</div>
<div class="t" style="left:1459.90px;width:71.26px;text-align:right;top:416.43px;line-height:30px;font-size:16.5px;color:#000;-webkit-text-stroke:0.2px #000;">558</div>
<div class="t" style="left:1536.16px;width:71.26px;text-align:right;top:416.43px;line-height:30px;font-size:16.5px;color:#000;-webkit-text-stroke:0.2px #000;">604</div>
<div class="t" style="left:1612.70px;width:128.90px;text-align:right;top:416.43px;line-height:30px;font-size:16.5px;color:#000;-webkit-text-stroke:0.2px #000;">400</div>
<div style="left:507.10px;top:414.52px;width:0;height:0;border-top:10px solid #0a7d0a;border-right:10px solid transparent"></div>
<div class="t" style="left:-27.95px;width:71.25px;text-align:right;top:445.06px;line-height:30px;font-size:16.5px;color:#0b70c1;-webkit-text-stroke:0.3px #0b70c1;">420</div>
<div class="t" style="left:48.30px;width:71.25px;text-align:right;top:445.06px;line-height:30px;font-size:16.5px;color:#0b70c1;-webkit-text-stroke:0.3px #0b70c1;">430</div>
<div class="t" style="left:124.55px;width:71.25px;text-align:right;top:445.06px;line-height:30px;font-size:16.5px;color:#0b70c1;-webkit-text-stroke:0.3px #0b70c1;">435</div>
<div class="t" style="left:200.80px;width:71.25px;text-align:right;top:445.06px;line-height:30px;font-size:16.5px;color:#0b70c1;-webkit-text-stroke:0.3px #0b70c1;">395</div>
<div class="t" style="left:277.05px;width:71.25px;text-align:right;top:445.06px;line-height:30px;font-size:16.5px;color:#0b70c1;-webkit-text-stroke:0.3px #0b70c1;">355</div>
<div class="t" style="left:353.30px;width:71.25px;text-align:right;top:445.06px;line-height:30px;font-size:16.5px;color:#0b70c1;-webkit-text-stroke:0.3px #0b70c1;">310</div>
<div class="t" style="left:429.55px;width:71.25px;text-align:right;top:445.06px;line-height:30px;font-size:16.5px;color:#0b70c1;-webkit-text-stroke:0.3px #0b70c1;">295</div>
<div class="t" style="left:505.80px;width:90.90px;text-align:right;top:445.06px;line-height:30px;font-size:16.5px;color:#000;-webkit-text-stroke:0.2px #000;">374,4</div>
<div class="t" style="left:601.70px;width:90.60px;text-align:right;top:445.06px;line-height:30px;font-size:16.5px;color:#000;-webkit-text-stroke:0.2px #000;">374,4</div>
<div class="t" style="left:697.30px;width:71.26px;text-align:right;top:445.06px;line-height:30px;font-size:16.5px;color:#000;-webkit-text-stroke:0.2px #000;">337</div>
<div class="t" style="left:773.56px;width:71.26px;text-align:right;top:445.06px;line-height:30px;font-size:16.5px;color:#000;-webkit-text-stroke:0.2px #000;">344</div>
<div class="t" style="left:849.82px;width:71.26px;text-align:right;top:445.06px;line-height:30px;font-size:16.5px;color:#000;-webkit-text-stroke:0.2px #000;">356</div>
<div class="t" style="left:926.08px;width:71.26px;text-align:right;top:445.06px;line-height:30px;font-size:16.5px;color:#000;-webkit-text-stroke:0.2px #000;">374</div>
<div class="t" style="left:1002.34px;width:71.26px;text-align:right;top:445.06px;line-height:30px;font-size:16.5px;color:#000;-webkit-text-stroke:0.2px #000;">393</div>
<div class="t" style="left:1078.60px;width:71.26px;text-align:right;top:445.06px;line-height:30px;font-size:16.5px;color:#000;-webkit-text-stroke:0.2px #000;">412</div>
<div class="t" style="left:1154.86px;width:71.26px;text-align:right;top:445.06px;line-height:30px;font-size:16.5px;color:#000;-webkit-text-stroke:0.2px #000;">431</div>
<div class="t" style="left:1231.12px;width:71.26px;text-align:right;top:445.06px;line-height:30px;font-size:16.5px;color:#000;-webkit-text-stroke:0.2px #000;">419</div>
<div class="t" style="left:1307.38px;width:71.26px;text-align:right;top:445.06px;line-height:30px;font-size:16.5px;color:#000;-webkit-text-stroke:0.2px #000;">393</div>
<div class="t" style="left:1383.64px;width:71.26px;text-align:right;top:445.06px;line-height:30px;font-size:16.5px;color:#000;-webkit-text-stroke:0.2px #000;">374</div>
<div class="t" style="left:1459.90px;width:71.26px;text-align:right;top:445.06px;line-height:30px;font-size:16.5px;color:#000;-webkit-text-stroke:0.2px #000;">449</div>
<div class="t" style="left:1536.16px;width:71.26px;text-align:right;top:445.06px;line-height:30px;font-size:16.5px;color:#000;-webkit-text-stroke:0.2px #000;">487</div>
<div class="t" style="left:1612.70px;width:128.90px;text-align:right;top:445.06px;line-height:30px;font-size:16.5px;color:#000;-webkit-text-stroke:0.2px #000;">700</div>
<div style="left:507.10px;top:443.15px;width:0;height:0;border-top:10px solid #0a7d0a;border-right:10px solid transparent"></div>
<div class="t" style="left:-27.95px;width:71.25px;text-align:right;top:473.69px;line-height:30px;font-size:16.5px;color:#0b70c1;-webkit-text-stroke:0.3px #0b70c1;">308</div>
<div class="t" style="left:48.30px;width:71.25px;text-align:right;top:473.69px;line-height:30px;font-size:16.5px;color:#0b70c1;-webkit-text-stroke:0.3px #0b70c1;">315</div>
<div class="t" style="left:124.55px;width:71.25px;text-align:right;top:473.69px;line-height:30px;font-size:16.5px;color:#0b70c1;-webkit-text-stroke:0.3px #0b70c1;">318</div>
<div class="t" style="left:200.80px;width:71.25px;text-align:right;top:473.69px;line-height:30px;font-size:16.5px;color:#0b70c1;-webkit-text-stroke:0.3px #0b70c1;">290</div>
<div class="t" style="left:277.05px;width:71.25px;text-align:right;top:473.69px;line-height:30px;font-size:16.5px;color:#0b70c1;-webkit-text-stroke:0.3px #0b70c1;">260</div>
<div class="t" style="left:353.30px;width:71.25px;text-align:right;top:473.69px;line-height:30px;font-size:16.5px;color:#0b70c1;-webkit-text-stroke:0.3px #0b70c1;">228</div>
<div class="t" style="left:429.55px;width:71.25px;text-align:right;top:473.69px;line-height:30px;font-size:16.5px;color:#0b70c1;-webkit-text-stroke:0.3px #0b70c1;">215</div>
<div class="t" style="left:505.80px;width:90.90px;text-align:right;top:473.69px;line-height:30px;font-size:16.5px;color:#000;-webkit-text-stroke:0.2px #000;">273,7</div>
<div class="t" style="left:601.70px;width:90.60px;text-align:right;top:473.69px;line-height:30px;font-size:16.5px;color:#000;-webkit-text-stroke:0.2px #000;">283,0</div>
<div class="t" style="left:697.30px;width:71.26px;text-align:right;top:473.69px;line-height:30px;font-size:16.5px;color:#000;-webkit-text-stroke:0.2px #000;">255</div>
<div class="t" style="left:773.56px;width:71.26px;text-align:right;top:473.69px;line-height:30px;font-size:16.5px;color:#000;-webkit-text-stroke:0.2px #000;">260</div>
<div class="t" style="left:849.82px;width:71.26px;text-align:right;top:473.69px;line-height:30px;font-size:16.5px;color:#000;-webkit-text-stroke:0.2px #000;">269</div>
<div class="t" style="left:926.08px;width:71.26px;text-align:right;top:473.69px;line-height:30px;font-size:16.5px;color:#000;-webkit-text-stroke:0.2px #000;">283</div>
<div class="t" style="left:1002.34px;width:71.26px;text-align:right;top:473.69px;line-height:30px;font-size:16.5px;color:#000;-webkit-text-stroke:0.2px #000;">297</div>
<div class="t" style="left:1078.60px;width:71.26px;text-align:right;top:473.69px;line-height:30px;font-size:16.5px;color:#000;-webkit-text-stroke:0.2px #000;">311</div>
<div class="t" style="left:1154.86px;width:71.26px;text-align:right;top:473.69px;line-height:30px;font-size:16.5px;color:#000;-webkit-text-stroke:0.2px #000;">325</div>
<div class="t" style="left:1231.12px;width:71.26px;text-align:right;top:473.69px;line-height:30px;font-size:16.5px;color:#000;-webkit-text-stroke:0.2px #000;">317</div>
<div class="t" style="left:1307.38px;width:71.26px;text-align:right;top:473.69px;line-height:30px;font-size:16.5px;color:#000;-webkit-text-stroke:0.2px #000;">297</div>
<div class="t" style="left:1383.64px;width:71.26px;text-align:right;top:473.69px;line-height:30px;font-size:16.5px;color:#000;-webkit-text-stroke:0.2px #000;">283</div>
<div class="t" style="left:1459.90px;width:71.26px;text-align:right;top:473.69px;line-height:30px;font-size:16.5px;color:#000;-webkit-text-stroke:0.2px #000;">340</div>
<div class="t" style="left:1536.16px;width:71.26px;text-align:right;top:473.69px;line-height:30px;font-size:16.5px;color:#000;-webkit-text-stroke:0.2px #000;">368</div>
<div class="t" style="left:1612.70px;width:128.90px;text-align:right;top:473.69px;line-height:30px;font-size:16.5px;color:#000;-webkit-text-stroke:0.2px #000;">600</div>
<div style="left:507.10px;top:471.78px;width:0;height:0;border-top:10px solid #0a7d0a;border-right:10px solid transparent"></div>
<div class="t" style="left:-27.95px;width:71.25px;text-align:right;top:502.32px;line-height:30px;font-size:16.5px;color:#0b70c1;-webkit-text-stroke:0.3px #0b70c1;">340</div>
<div class="t" style="left:48.30px;width:71.25px;text-align:right;top:502.32px;line-height:30px;font-size:16.5px;color:#0b70c1;-webkit-text-stroke:0.3px #0b70c1;">335</div>
<div class="t" style="left:124.55px;width:71.25px;text-align:right;top:502.32px;line-height:30px;font-size:16.5px;color:#0b70c1;-webkit-text-stroke:0.3px #0b70c1;">290</div>
<div class="t" style="left:200.80px;width:71.25px;text-align:right;top:502.32px;line-height:30px;font-size:16.5px;color:#0b70c1;-webkit-text-stroke:0.3px #0b70c1;">210</div>
<div class="t" style="left:277.05px;width:71.25px;text-align:right;top:502.32px;line-height:30px;font-size:16.5px;color:#0b70c1;-webkit-text-stroke:0.3px #0b70c1;">120</div>
<div class="t" style="left:353.30px;width:71.25px;text-align:right;top:502.32px;line-height:30px;font-size:16.5px;color:#0b70c1;-webkit-text-stroke:0.3px #0b70c1;">70</div>
<div class="t" style="left:429.55px;width:71.25px;text-align:right;top:502.32px;line-height:30px;font-size:16.5px;color:#0b70c1;-webkit-text-stroke:0.3px #0b70c1;">50</div>
<div class="t" style="left:505.80px;width:90.90px;text-align:right;top:502.32px;line-height:30px;font-size:16.5px;color:#000;-webkit-text-stroke:0.2px #000;">195,4</div>
<div class="t" style="left:601.70px;width:90.60px;text-align:right;top:502.32px;line-height:30px;font-size:16.5px;color:#000;-webkit-text-stroke:0.2px #000;">195,4</div>
<div class="t" style="left:697.30px;width:71.26px;text-align:right;top:502.32px;line-height:30px;font-size:16.5px;color:#000;-webkit-text-stroke:0.2px #000;">176</div>
<div class="t" style="left:773.56px;width:71.26px;text-align:right;top:502.32px;line-height:30px;font-size:16.5px;color:#000;-webkit-text-stroke:0.2px #000;">180</div>
<div class="t" style="left:849.82px;width:71.26px;text-align:right;top:502.32px;line-height:30px;font-size:16.5px;color:#000;-webkit-text-stroke:0.2px #000;">186</div>
<div class="t" style="left:926.08px;width:71.26px;text-align:right;top:502.32px;line-height:30px;font-size:16.5px;color:#000;-webkit-text-stroke:0.2px #000;">195</div>
<div class="t" style="left:1002.34px;width:71.26px;text-align:right;top:502.32px;line-height:30px;font-size:16.5px;color:#000;-webkit-text-stroke:0.2px #000;">205</div>
<div class="t" style="left:1078.60px;width:71.26px;text-align:right;top:502.32px;line-height:30px;font-size:16.5px;color:#000;-webkit-text-stroke:0.2px #000;">215</div>
<div class="t" style="left:1154.86px;width:71.26px;text-align:right;top:502.32px;line-height:30px;font-size:16.5px;color:#000;-webkit-text-stroke:0.2px #000;">225</div>
<div class="t" style="left:1231.12px;width:71.26px;text-align:right;top:502.32px;line-height:30px;font-size:16.5px;color:#000;-webkit-text-stroke:0.2px #000;">219</div>
<div class="t" style="left:1307.38px;width:71.26px;text-align:right;top:502.32px;line-height:30px;font-size:16.5px;color:#000;-webkit-text-stroke:0.2px #000;">205</div>
<div class="t" style="left:1383.64px;width:71.26px;text-align:right;top:502.32px;line-height:30px;font-size:16.5px;color:#000;-webkit-text-stroke:0.2px #000;">195</div>
<div class="t" style="left:1459.90px;width:71.26px;text-align:right;top:502.32px;line-height:30px;font-size:16.5px;color:#000;-webkit-text-stroke:0.2px #000;">235</div>
<div class="t" style="left:1536.16px;width:71.26px;text-align:right;top:502.32px;line-height:30px;font-size:16.5px;color:#000;-webkit-text-stroke:0.2px #000;">254</div>
<div class="t" style="left:1612.70px;width:128.90px;text-align:right;top:502.32px;line-height:30px;font-size:16.5px;color:#000;-webkit-text-stroke:0.2px #000;">500</div>
<div style="left:507.10px;top:500.41px;width:0;height:0;border-top:10px solid #0a7d0a;border-right:10px solid transparent"></div>
<div class="t" style="left:-27.95px;width:71.25px;text-align:right;top:530.95px;line-height:30px;font-size:16.5px;color:#0b70c1;-webkit-text-stroke:0.3px #0b70c1;">358</div>
<div class="t" style="left:48.30px;width:71.25px;text-align:right;top:530.95px;line-height:30px;font-size:16.5px;color:#0b70c1;-webkit-text-stroke:0.3px #0b70c1;">350</div>
<div class="t" style="left:124.55px;width:71.25px;text-align:right;top:530.95px;line-height:30px;font-size:16.5px;color:#0b70c1;-webkit-text-stroke:0.3px #0b70c1;">305</div>
<div class="t" style="left:200.80px;width:71.25px;text-align:right;top:530.95px;line-height:30px;font-size:16.5px;color:#0b70c1;-webkit-text-stroke:0.3px #0b70c1;">220</div>
<div class="t" style="left:277.05px;width:71.25px;text-align:right;top:530.95px;line-height:30px;font-size:16.5px;color:#0b70c1;-webkit-text-stroke:0.3px #0b70c1;">128</div>
<div class="t" style="left:353.30px;width:71.25px;text-align:right;top:530.95px;line-height:30px;font-size:16.5px;color:#0b70c1;-webkit-text-stroke:0.3px #0b70c1;">75</div>
<div class="t" style="left:429.55px;width:71.25px;text-align:right;top:530.95px;line-height:30px;font-size:16.5px;color:#0b70c1;-webkit-text-stroke:0.3px #0b70c1;">55</div>
<div class="t" style="left:505.80px;width:90.90px;text-align:right;top:530.95px;line-height:30px;font-size:16.5px;color:#000;-webkit-text-stroke:0.2px #000;">206,4</div>
<div class="t" style="left:601.70px;width:90.60px;text-align:right;top:530.95px;line-height:30px;font-size:16.5px;color:#000;-webkit-text-stroke:0.2px #000;">206,4</div>
<div class="t" style="left:697.30px;width:71.26px;text-align:right;top:530.95px;line-height:30px;font-size:16.5px;color:#000;-webkit-text-stroke:0.2px #000;">186</div>
<div class="t" style="left:773.56px;width:71.26px;text-align:right;top:530.95px;line-height:30px;font-size:16.5px;color:#000;-webkit-text-stroke:0.2px #000;">190</div>
<div class="t" style="left:849.82px;width:71.26px;text-align:right;top:530.95px;line-height:30px;font-size:16.5px;color:#000;-webkit-text-stroke:0.2px #000;">196</div>
<div class="t" style="left:926.08px;width:71.26px;text-align:right;top:530.95px;line-height:30px;font-size:16.5px;color:#000;-webkit-text-stroke:0.2px #000;">206</div>
<div class="t" style="left:1002.34px;width:71.26px;text-align:right;top:530.95px;line-height:30px;font-size:16.5px;color:#000;-webkit-text-stroke:0.2px #000;">217</div>
<div class="t" style="left:1078.60px;width:71.26px;text-align:right;top:530.95px;line-height:30px;font-size:16.5px;color:#000;-webkit-text-stroke:0.2px #000;">227</div>
<div class="t" style="left:1154.86px;width:71.26px;text-align:right;top:530.95px;line-height:30px;font-size:16.5px;color:#000;-webkit-text-stroke:0.2px #000;">237</div>
<div class="t" style="left:1231.12px;width:71.26px;text-align:right;top:530.95px;line-height:30px;font-size:16.5px;color:#000;-webkit-text-stroke:0.2px #000;">231</div>
<div class="t" style="left:1307.38px;width:71.26px;text-align:right;top:530.95px;line-height:30px;font-size:16.5px;color:#000;-webkit-text-stroke:0.2px #000;">217</div>
<div class="t" style="left:1383.64px;width:71.26px;text-align:right;top:530.95px;line-height:30px;font-size:16.5px;color:#000;-webkit-text-stroke:0.2px #000;">206</div>
<div class="t" style="left:1459.90px;width:71.26px;text-align:right;top:530.95px;line-height:30px;font-size:16.5px;color:#000;-webkit-text-stroke:0.2px #000;">248</div>
<div class="t" style="left:1536.16px;width:71.26px;text-align:right;top:530.95px;line-height:30px;font-size:16.5px;color:#000;-webkit-text-stroke:0.2px #000;">268</div>
<div class="t" style="left:1612.70px;width:128.90px;text-align:right;top:530.95px;line-height:30px;font-size:16.5px;color:#000;-webkit-text-stroke:0.2px #000;">200</div>
<div style="left:507.10px;top:529.04px;width:0;height:0;border-top:10px solid #0a7d0a;border-right:10px solid transparent"></div>
<div class="t" style="left:-27.95px;width:71.25px;text-align:right;top:559.58px;line-height:30px;font-size:16.5px;color:#0b70c1;-webkit-text-stroke:0.3px #0b70c1;">138</div>
<div class="t" style="left:48.30px;width:71.25px;text-align:right;top:559.58px;line-height:30px;font-size:16.5px;color:#0b70c1;-webkit-text-stroke:0.3px #0b70c1;">135</div>
<div class="t" style="left:124.55px;width:71.25px;text-align:right;top:559.58px;line-height:30px;font-size:16.5px;color:#0b70c1;-webkit-text-stroke:0.3px #0b70c1;">140</div>
<div class="t" style="left:200.80px;width:71.25px;text-align:right;top:559.58px;line-height:30px;font-size:16.5px;color:#0b70c1;-webkit-text-stroke:0.3px #0b70c1;">132</div>
<div class="t" style="left:277.05px;width:71.25px;text-align:right;top:559.58px;line-height:30px;font-size:16.5px;color:#0b70c1;-webkit-text-stroke:0.3px #0b70c1;">125</div>
<div class="t" style="left:353.30px;width:71.25px;text-align:right;top:559.58px;line-height:30px;font-size:16.5px;color:#0b70c1;-webkit-text-stroke:0.3px #0b70c1;">118</div>
<div class="t" style="left:429.55px;width:71.25px;text-align:right;top:559.58px;line-height:30px;font-size:16.5px;color:#0b70c1;-webkit-text-stroke:0.3px #0b70c1;">108</div>
<div class="t" style="left:505.80px;width:90.90px;text-align:right;top:559.58px;line-height:30px;font-size:16.5px;color:#000;-webkit-text-stroke:0.2px #000;">126,1</div>
<div class="t" style="left:601.70px;width:90.60px;text-align:right;top:559.58px;line-height:30px;font-size:16.5px;color:#000;-webkit-text-stroke:0.2px #000;">126,1</div>
<div class="t" style="left:697.30px;width:71.26px;text-align:right;top:559.58px;line-height:30px;font-size:16.5px;color:#000;-webkit-text-stroke:0.2px #000;">113</div>
<div class="t" style="left:773.56px;width:71.26px;text-align:right;top:559.58px;line-height:30px;font-size:16.5px;color:#000;-webkit-text-stroke:0.2px #000;">116</div>
<div class="t" style="left:849.82px;width:71.26px;text-align:right;top:559.58px;line-height:30px;font-size:16.5px;color:#000;-webkit-text-stroke:0.2px #000;">120</div>
<div class="t" style="left:926.08px;width:71.26px;text-align:right;top:559.58px;line-height:30px;font-size:16.5px;color:#000;-webkit-text-stroke:0.2px #000;">126</div>
<div class="t" style="left:1002.34px;width:71.26px;text-align:right;top:559.58px;line-height:30px;font-size:16.5px;color:#000;-webkit-text-stroke:0.2px #000;">132</div>
<div class="t" style="left:1078.60px;width:71.26px;text-align:right;top:559.58px;line-height:30px;font-size:16.5px;color:#000;-webkit-text-stroke:0.2px #000;">139</div>
<div class="t" style="left:1154.86px;width:71.26px;text-align:right;top:559.58px;line-height:30px;font-size:16.5px;color:#000;-webkit-text-stroke:0.2px #000;">145</div>
<div class="t" style="left:1231.12px;width:71.26px;text-align:right;top:559.58px;line-height:30px;font-size:16.5px;color:#000;-webkit-text-stroke:0.2px #000;">141</div>
<div class="t" style="left:1307.38px;width:71.26px;text-align:right;top:559.58px;line-height:30px;font-size:16.5px;color:#000;-webkit-text-stroke:0.2px #000;">132</div>
<div class="t" style="left:1383.64px;width:71.26px;text-align:right;top:559.58px;line-height:30px;font-size:16.5px;color:#000;-webkit-text-stroke:0.2px #000;">126</div>
<div class="t" style="left:1459.90px;width:71.26px;text-align:right;top:559.58px;line-height:30px;font-size:16.5px;color:#000;-webkit-text-stroke:0.2px #000;">151</div>
<div class="t" style="left:1536.16px;width:71.26px;text-align:right;top:559.58px;line-height:30px;font-size:16.5px;color:#000;-webkit-text-stroke:0.2px #000;">164</div>
<div class="t" style="left:1612.70px;width:128.90px;text-align:right;top:559.58px;line-height:30px;font-size:16.5px;color:#000;-webkit-text-stroke:0.2px #000;">300</div>
<div style="left:507.10px;top:557.67px;width:0;height:0;border-top:10px solid #0a7d0a;border-right:10px solid transparent"></div>
<div class="t" style="left:-27.95px;width:71.25px;text-align:right;top:588.21px;line-height:30px;font-size:16.5px;color:#0b70c1;-webkit-text-stroke:0.3px #0b70c1;">130</div>
<div class="t" style="left:48.30px;width:71.25px;text-align:right;top:588.21px;line-height:30px;font-size:16.5px;color:#0b70c1;-webkit-text-stroke:0.3px #0b70c1;">128</div>
<div class="t" style="left:124.55px;width:71.25px;text-align:right;top:588.21px;line-height:30px;font-size:16.5px;color:#0b70c1;-webkit-text-stroke:0.3px #0b70c1;">132</div>
<div class="t" style="left:200.80px;width:71.25px;text-align:right;top:588.21px;line-height:30px;font-size:16.5px;color:#0b70c1;-webkit-text-stroke:0.3px #0b70c1;">125</div>
<div class="t" style="left:277.05px;width:71.25px;text-align:right;top:588.21px;line-height:30px;font-size:16.5px;color:#0b70c1;-webkit-text-stroke:0.3px #0b70c1;">118</div>
<div class="t" style="left:353.30px;width:71.25px;text-align:right;top:588.21px;line-height:30px;font-size:16.5px;color:#0b70c1;-webkit-text-stroke:0.3px #0b70c1;">112</div>
<div class="t" style="left:429.55px;width:71.25px;text-align:right;top:588.21px;line-height:30px;font-size:16.5px;color:#0b70c1;-webkit-text-stroke:0.3px #0b70c1;">102</div>
<div class="t" style="left:505.80px;width:90.90px;text-align:right;top:588.21px;line-height:30px;font-size:16.5px;color:#000;-webkit-text-stroke:0.2px #000;">119,0</div>
<div class="t" style="left:601.70px;width:90.60px;text-align:right;top:588.21px;line-height:30px;font-size:16.5px;color:#000;-webkit-text-stroke:0.2px #000;">119,0</div>
<div class="t" style="left:697.30px;width:71.26px;text-align:right;top:588.21px;line-height:30px;font-size:16.5px;color:#000;-webkit-text-stroke:0.2px #000;">107</div>
<div class="t" style="left:773.56px;width:71.26px;text-align:right;top:588.21px;line-height:30px;font-size:16.5px;color:#000;-webkit-text-stroke:0.2px #000;">109</div>
<div class="t" style="left:849.82px;width:71.26px;text-align:right;top:588.21px;line-height:30px;font-size:16.5px;color:#000;-webkit-text-stroke:0.2px #000;">113</div>
<div class="t" style="left:926.08px;width:71.26px;text-align:right;top:588.21px;line-height:30px;font-size:16.5px;color:#000;-webkit-text-stroke:0.2px #000;">119</div>
<div class="t" style="left:1002.34px;width:71.26px;text-align:right;top:588.21px;line-height:30px;font-size:16.5px;color:#000;-webkit-text-stroke:0.2px #000;">125</div>
<div class="t" style="left:1078.60px;width:71.26px;text-align:right;top:588.21px;line-height:30px;font-size:16.5px;color:#000;-webkit-text-stroke:0.2px #000;">131</div>
<div class="t" style="left:1154.86px;width:71.26px;text-align:right;top:588.21px;line-height:30px;font-size:16.5px;color:#000;-webkit-text-stroke:0.2px #000;">137</div>
<div class="t" style="left:1231.12px;width:71.26px;text-align:right;top:588.21px;line-height:30px;font-size:16.5px;color:#000;-webkit-text-stroke:0.2px #000;">133</div>
<div class="t" style="left:1307.38px;width:71.26px;text-align:right;top:588.21px;line-height:30px;font-size:16.5px;color:#000;-webkit-text-stroke:0.2px #000;">125</div>
<div class="t" style="left:1383.64px;width:71.26px;text-align:right;top:588.21px;line-height:30px;font-size:16.5px;color:#000;-webkit-text-stroke:0.2px #000;">119</div>
<div class="t" style="left:1459.90px;width:71.26px;text-align:right;top:588.21px;line-height:30px;font-size:16.5px;color:#000;-webkit-text-stroke:0.2px #000;">143</div>
<div class="t" style="left:1536.16px;width:71.26px;text-align:right;top:588.21px;line-height:30px;font-size:16.5px;color:#000;-webkit-text-stroke:0.2px #000;">155</div>
<div class="t" style="left:1612.70px;width:128.90px;text-align:right;top:588.21px;line-height:30px;font-size:16.5px;color:#000;-webkit-text-stroke:0.2px #000;">300</div>
<div style="left:507.10px;top:586.30px;width:0;height:0;border-top:10px solid #0a7d0a;border-right:10px solid transparent"></div>
<div class="t" style="left:-27.95px;width:71.25px;text-align:right;top:616.84px;line-height:30px;font-size:16.5px;color:#0b70c1;-webkit-text-stroke:0.3px #0b70c1;">58</div>
<div class="t" style="left:48.30px;width:71.25px;text-align:right;top:616.84px;line-height:30px;font-size:16.5px;color:#0b70c1;-webkit-text-stroke:0.3px #0b70c1;">60</div>
<div class="t" style="left:124.55px;width:71.25px;text-align:right;top:616.84px;line-height:30px;font-size:16.5px;color:#0b70c1;-webkit-text-stroke:0.3px #0b70c1;">70</div>
<div class="t" style="left:200.80px;width:71.25px;text-align:right;top:616.84px;line-height:30px;font-size:16.5px;color:#0b70c1;-webkit-text-stroke:0.3px #0b70c1;">95</div>
<div class="t" style="left:277.05px;width:71.25px;text-align:right;top:616.84px;line-height:30px;font-size:16.5px;color:#0b70c1;-webkit-text-stroke:0.3px #0b70c1;">155</div>
<div class="t" style="left:353.30px;width:71.25px;text-align:right;top:616.84px;line-height:30px;font-size:16.5px;color:#0b70c1;-webkit-text-stroke:0.3px #0b70c1;">218</div>
<div class="t" style="left:429.55px;width:71.25px;text-align:right;top:616.84px;line-height:30px;font-size:16.5px;color:#0b70c1;-webkit-text-stroke:0.3px #0b70c1;">245</div>
<div class="t" style="left:505.80px;width:90.90px;text-align:right;top:616.84px;line-height:30px;font-size:16.5px;color:#000;-webkit-text-stroke:0.2px #000;">118,7</div>
<div class="t" style="left:601.70px;width:90.60px;text-align:right;top:616.84px;line-height:30px;font-size:16.5px;color:#000;-webkit-text-stroke:0.2px #000;">118,7</div>
<div class="t" style="left:697.30px;width:71.26px;text-align:right;top:616.84px;line-height:30px;font-size:16.5px;color:#000;-webkit-text-stroke:0.2px #000;">107</div>
<div class="t" style="left:773.56px;width:71.26px;text-align:right;top:616.84px;line-height:30px;font-size:16.5px;color:#000;-webkit-text-stroke:0.2px #000;">109</div>
<div class="t" style="left:849.82px;width:71.26px;text-align:right;top:616.84px;line-height:30px;font-size:16.5px;color:#000;-webkit-text-stroke:0.2px #000;">113</div>
<div class="t" style="left:926.08px;width:71.26px;text-align:right;top:616.84px;line-height:30px;font-size:16.5px;color:#000;-webkit-text-stroke:0.2px #000;">119</div>
<div class="t" style="left:1002.34px;width:71.26px;text-align:right;top:616.84px;line-height:30px;font-size:16.5px;color:#000;-webkit-text-stroke:0.2px #000;">125</div>
<div class="t" style="left:1078.60px;width:71.26px;text-align:right;top:616.84px;line-height:30px;font-size:16.5px;color:#000;-webkit-text-stroke:0.2px #000;">131</div>
<div class="t" style="left:1154.86px;width:71.26px;text-align:right;top:616.84px;line-height:30px;font-size:16.5px;color:#000;-webkit-text-stroke:0.2px #000;">136</div>
<div class="t" style="left:1231.12px;width:71.26px;text-align:right;top:616.84px;line-height:30px;font-size:16.5px;color:#000;-webkit-text-stroke:0.2px #000;">133</div>
<div class="t" style="left:1307.38px;width:71.26px;text-align:right;top:616.84px;line-height:30px;font-size:16.5px;color:#000;-webkit-text-stroke:0.2px #000;">125</div>
<div class="t" style="left:1383.64px;width:71.26px;text-align:right;top:616.84px;line-height:30px;font-size:16.5px;color:#000;-webkit-text-stroke:0.2px #000;">119</div>
<div class="t" style="left:1459.90px;width:71.26px;text-align:right;top:616.84px;line-height:30px;font-size:16.5px;color:#000;-webkit-text-stroke:0.2px #000;">142</div>
<div class="t" style="left:1536.16px;width:71.26px;text-align:right;top:616.84px;line-height:30px;font-size:16.5px;color:#000;-webkit-text-stroke:0.2px #000;">154</div>
<div class="t" style="left:1612.70px;width:128.90px;text-align:right;top:616.84px;line-height:30px;font-size:16.5px;color:#000;-webkit-text-stroke:0.2px #000;">120</div>
<div style="left:507.10px;top:614.93px;width:0;height:0;border-top:10px solid #0a7d0a;border-right:10px solid transparent"></div>
<div class="t" style="left:-27.95px;width:71.25px;text-align:right;top:645.47px;line-height:30px;font-size:16.5px;color:#0b70c1;-webkit-text-stroke:0.3px #0b70c1;">525</div>
<div class="t" style="left:48.30px;width:71.25px;text-align:right;top:645.47px;line-height:30px;font-size:16.5px;color:#0b70c1;-webkit-text-stroke:0.3px #0b70c1;">535</div>
<div class="t" style="left:124.55px;width:71.25px;text-align:right;top:645.47px;line-height:30px;font-size:16.5px;color:#0b70c1;-webkit-text-stroke:0.3px #0b70c1;">540</div>
<div class="t" style="left:200.80px;width:71.25px;text-align:right;top:645.47px;line-height:30px;font-size:16.5px;color:#0b70c1;-webkit-text-stroke:0.3px #0b70c1;">492</div>
<div class="t" style="left:277.05px;width:71.25px;text-align:right;top:645.47px;line-height:30px;font-size:16.5px;color:#0b70c1;-webkit-text-stroke:0.3px #0b70c1;">440</div>
<div class="t" style="left:353.30px;width:71.25px;text-align:right;top:645.47px;line-height:30px;font-size:16.5px;color:#0b70c1;-webkit-text-stroke:0.3px #0b70c1;">385</div>
<div class="t" style="left:429.55px;width:71.25px;text-align:right;top:645.47px;line-height:30px;font-size:16.5px;color:#0b70c1;-webkit-text-stroke:0.3px #0b70c1;">365</div>
<div class="t" style="left:505.80px;width:90.90px;text-align:right;top:645.47px;line-height:30px;font-size:16.5px;color:#000;-webkit-text-stroke:0.2px #000;">466,9</div>
<div class="t" style="left:601.70px;width:90.60px;text-align:right;top:645.47px;line-height:30px;font-size:16.5px;color:#000;-webkit-text-stroke:0.2px #000;">490,3</div>
<div class="t" style="left:697.30px;width:71.26px;text-align:right;top:645.47px;line-height:30px;font-size:16.5px;color:#000;-webkit-text-stroke:0.2px #000;">441</div>
<div class="t" style="left:773.56px;width:71.26px;text-align:right;top:645.47px;line-height:30px;font-size:16.5px;color:#000;-webkit-text-stroke:0.2px #000;">451</div>
<div class="t" style="left:849.82px;width:71.26px;text-align:right;top:645.47px;line-height:30px;font-size:16.5px;color:#000;-webkit-text-stroke:0.2px #000;">466</div>
<div class="t" style="left:926.08px;width:71.26px;text-align:right;top:645.47px;line-height:30px;font-size:16.5px;color:#000;-webkit-text-stroke:0.2px #000;">490</div>
<div class="t" style="left:1002.34px;width:71.26px;text-align:right;top:645.47px;line-height:30px;font-size:16.5px;color:#000;-webkit-text-stroke:0.2px #000;">515</div>
<div class="t" style="left:1078.60px;width:71.26px;text-align:right;top:645.47px;line-height:30px;font-size:16.5px;color:#000;-webkit-text-stroke:0.2px #000;">539</div>
<div class="t" style="left:1154.86px;width:71.26px;text-align:right;top:645.47px;line-height:30px;font-size:16.5px;color:#000;-webkit-text-stroke:0.2px #000;">564</div>
<div class="t" style="left:1231.12px;width:71.26px;text-align:right;top:645.47px;line-height:30px;font-size:16.5px;color:#000;-webkit-text-stroke:0.2px #000;">549</div>
<div class="t" style="left:1307.38px;width:71.26px;text-align:right;top:645.47px;line-height:30px;font-size:16.5px;color:#000;-webkit-text-stroke:0.2px #000;">515</div>
<div class="t" style="left:1383.64px;width:71.26px;text-align:right;top:645.47px;line-height:30px;font-size:16.5px;color:#000;-webkit-text-stroke:0.2px #000;">490</div>
<div class="t" style="left:1459.90px;width:71.26px;text-align:right;top:645.47px;line-height:30px;font-size:16.5px;color:#000;-webkit-text-stroke:0.2px #000;">588</div>
<div class="t" style="left:1536.16px;width:71.26px;text-align:right;top:645.47px;line-height:30px;font-size:16.5px;color:#000;-webkit-text-stroke:0.2px #000;">637</div>
<div class="t" style="left:1612.70px;width:128.90px;text-align:right;top:645.47px;line-height:30px;font-size:16.5px;color:#000;-webkit-text-stroke:0.2px #000;">1.000</div>
<div style="left:507.10px;top:643.56px;width:0;height:0;border-top:10px solid #0a7d0a;border-right:10px solid transparent"></div>
<div class="t" style="left:-27.95px;width:71.25px;text-align:right;top:674.10px;line-height:30px;font-size:16.5px;color:#0b70c1;-webkit-text-stroke:0.3px #0b70c1;">640</div>
<div class="t" style="left:48.30px;width:71.25px;text-align:right;top:674.10px;line-height:30px;font-size:16.5px;color:#0b70c1;-webkit-text-stroke:0.3px #0b70c1;">625</div>
<div class="t" style="left:124.55px;width:71.25px;text-align:right;top:674.10px;line-height:30px;font-size:16.5px;color:#0b70c1;-webkit-text-stroke:0.3px #0b70c1;">545</div>
<div class="t" style="left:200.80px;width:71.25px;text-align:right;top:674.10px;line-height:30px;font-size:16.5px;color:#0b70c1;-webkit-text-stroke:0.3px #0b70c1;">395</div>
<div class="t" style="left:277.05px;width:71.25px;text-align:right;top:674.10px;line-height:30px;font-size:16.5px;color:#0b70c1;-webkit-text-stroke:0.3px #0b70c1;">225</div>
<div class="t" style="left:353.30px;width:71.25px;text-align:right;top:674.10px;line-height:30px;font-size:16.5px;color:#0b70c1;-webkit-text-stroke:0.3px #0b70c1;">130</div>
<div class="t" style="left:429.55px;width:71.25px;text-align:right;top:674.10px;line-height:30px;font-size:16.5px;color:#0b70c1;-webkit-text-stroke:0.3px #0b70c1;">98</div>
<div class="t" style="left:505.80px;width:90.90px;text-align:right;top:674.10px;line-height:30px;font-size:16.5px;color:#000;-webkit-text-stroke:0.2px #000;">370,3</div>
<div class="t" style="left:601.70px;width:90.60px;text-align:right;top:674.10px;line-height:30px;font-size:16.5px;color:#000;-webkit-text-stroke:0.2px #000;">370,3</div>
<div class="t" style="left:697.30px;width:71.26px;text-align:right;top:674.10px;line-height:30px;font-size:16.5px;color:#000;-webkit-text-stroke:0.2px #000;">333</div>
<div class="t" style="left:773.56px;width:71.26px;text-align:right;top:674.10px;line-height:30px;font-size:16.5px;color:#000;-webkit-text-stroke:0.2px #000;">341</div>
<div class="t" style="left:849.82px;width:71.26px;text-align:right;top:674.10px;line-height:30px;font-size:16.5px;color:#000;-webkit-text-stroke:0.2px #000;">352</div>
<div class="t" style="left:926.08px;width:71.26px;text-align:right;top:674.10px;line-height:30px;font-size:16.5px;color:#000;-webkit-text-stroke:0.2px #000;">370</div>
<div class="t" style="left:1002.34px;width:71.26px;text-align:right;top:674.10px;line-height:30px;font-size:16.5px;color:#000;-webkit-text-stroke:0.2px #000;">389</div>
<div class="t" style="left:1078.60px;width:71.26px;text-align:right;top:674.10px;line-height:30px;font-size:16.5px;color:#000;-webkit-text-stroke:0.2px #000;">407</div>
<div class="t" style="left:1154.86px;width:71.26px;text-align:right;top:674.10px;line-height:30px;font-size:16.5px;color:#000;-webkit-text-stroke:0.2px #000;">426</div>
<div class="t" style="left:1231.12px;width:71.26px;text-align:right;top:674.10px;line-height:30px;font-size:16.5px;color:#000;-webkit-text-stroke:0.2px #000;">415</div>
<div class="t" style="left:1307.38px;width:71.26px;text-align:right;top:674.10px;line-height:30px;font-size:16.5px;color:#000;-webkit-text-stroke:0.2px #000;">389</div>
<div class="t" style="left:1383.64px;width:71.26px;text-align:right;top:674.10px;line-height:30px;font-size:16.5px;color:#000;-webkit-text-stroke:0.2px #000;">370</div>
<div class="t" style="left:1459.90px;width:71.26px;text-align:right;top:674.10px;line-height:30px;font-size:16.5px;color:#000;-webkit-text-stroke:0.2px #000;">444</div>
<div class="t" style="left:1536.16px;width:71.26px;text-align:right;top:674.10px;line-height:30px;font-size:16.5px;color:#000;-webkit-text-stroke:0.2px #000;">481</div>
<div class="t" style="left:1612.70px;width:128.90px;text-align:right;top:674.10px;line-height:30px;font-size:16.5px;color:#000;-webkit-text-stroke:0.2px #000;">800</div>
<div style="left:507.10px;top:672.19px;width:0;height:0;border-top:10px solid #0a7d0a;border-right:10px solid transparent"></div>
<div class="t" style="left:-27.95px;width:71.25px;text-align:right;top:702.28px;line-height:30px;font-size:16.5px;color:#0b70c1;-webkit-text-stroke:0.3px #0b70c1;">82</div>
<div class="t" style="left:48.30px;width:71.25px;text-align:right;top:702.28px;line-height:30px;font-size:16.5px;color:#0b70c1;-webkit-text-stroke:0.3px #0b70c1;">85</div>
<div class="t" style="left:124.55px;width:71.25px;text-align:right;top:702.28px;line-height:30px;font-size:16.5px;color:#0b70c1;-webkit-text-stroke:0.3px #0b70c1;">92</div>
<div class="t" style="left:200.80px;width:71.25px;text-align:right;top:702.28px;line-height:30px;font-size:16.5px;color:#0b70c1;-webkit-text-stroke:0.3px #0b70c1;">118</div>
<div class="t" style="left:277.05px;width:71.25px;text-align:right;top:702.28px;line-height:30px;font-size:16.5px;color:#0b70c1;-webkit-text-stroke:0.3px #0b70c1;">175</div>
<div class="t" style="left:353.30px;width:71.25px;text-align:right;top:702.28px;line-height:30px;font-size:16.5px;color:#0b70c1;-webkit-text-stroke:0.3px #0b70c1;">240</div>
<div class="t" style="left:429.55px;width:71.25px;text-align:right;top:702.28px;line-height:30px;font-size:16.5px;color:#0b70c1;-webkit-text-stroke:0.3px #0b70c1;">268</div>
<div class="t" style="left:505.80px;width:90.90px;text-align:right;top:702.28px;line-height:30px;font-size:16.5px;color:#000;-webkit-text-stroke:0.2px #000;">140,7</div>
<div class="t" style="left:601.70px;width:90.60px;text-align:right;top:702.28px;line-height:30px;font-size:16.5px;color:#000;-webkit-text-stroke:0.2px #000;">147,7</div>
<div class="t" style="left:697.30px;width:71.26px;text-align:right;top:702.28px;line-height:30px;font-size:16.5px;color:#000;-webkit-text-stroke:0.2px #000;">133</div>
<div class="t" style="left:773.56px;width:71.26px;text-align:right;top:702.28px;line-height:30px;font-size:16.5px;color:#000;-webkit-text-stroke:0.2px #000;">136</div>
<div class="t" style="left:849.82px;width:71.26px;text-align:right;top:702.28px;line-height:30px;font-size:16.5px;color:#000;-webkit-text-stroke:0.2px #000;">140</div>
<div class="t" style="left:926.08px;width:71.26px;text-align:right;top:702.28px;line-height:30px;font-size:16.5px;color:#000;-webkit-text-stroke:0.2px #000;">148</div>
<div class="t" style="left:1002.34px;width:71.26px;text-align:right;top:702.28px;line-height:30px;font-size:16.5px;color:#000;-webkit-text-stroke:0.2px #000;">155</div>
<div class="t" style="left:1078.60px;width:71.26px;text-align:right;top:702.28px;line-height:30px;font-size:16.5px;color:#000;-webkit-text-stroke:0.2px #000;">162</div>
<div class="t" style="left:1154.86px;width:71.26px;text-align:right;top:702.28px;line-height:30px;font-size:16.5px;color:#000;-webkit-text-stroke:0.2px #000;">170</div>
<div class="t" style="left:1231.12px;width:71.26px;text-align:right;top:702.28px;line-height:30px;font-size:16.5px;color:#000;-webkit-text-stroke:0.2px #000;">165</div>
<div class="t" style="left:1307.38px;width:71.26px;text-align:right;top:702.28px;line-height:30px;font-size:16.5px;color:#000;-webkit-text-stroke:0.2px #000;">155</div>
<div class="t" style="left:1383.64px;width:71.26px;text-align:right;top:702.28px;line-height:30px;font-size:16.5px;color:#000;-webkit-text-stroke:0.2px #000;">148</div>
<div class="t" style="left:1459.90px;width:71.26px;text-align:right;top:702.28px;line-height:30px;font-size:16.5px;color:#000;-webkit-text-stroke:0.2px #000;">177</div>
<div class="t" style="left:1536.16px;width:71.26px;text-align:right;top:702.28px;line-height:30px;font-size:16.5px;color:#000;-webkit-text-stroke:0.2px #000;">192</div>
<div class="t" style="left:1612.70px;width:128.90px;text-align:right;top:702.28px;line-height:30px;font-size:16.5px;color:#000;-webkit-text-stroke:0.2px #000;">160</div>
<div style="left:507.10px;top:700.82px;width:0;height:0;border-top:10px solid #0a7d0a;border-right:10px solid transparent"></div>
<div style="left:505.60px;top:683.70px;width:12.40px;height:15.60px;background:#ffffff;"></div>
<div class="t" style="left:44.00px;top:88.66px;line-height:30px;font-size:18px;color:#fff;font-weight:bold;-webkit-text-stroke:0.3px #fff;transform-origin:0 0;transform:scaleX(0.8955)">15 SKUs</div>
<div class="t" style="left:133.10px;top:88.66px;line-height:30px;font-size:18px;color:#fff;font-weight:bold;-webkit-text-stroke:0.3px #fff;transform-origin:0 0;transform:scaleX(0.8951)">Seasonal Index</div>
<div class="t" style="left:274.07px;top:88.66px;line-height:30px;font-size:18px;color:#fff;font-weight:bold;-webkit-text-stroke:0.3px #fff;transform-origin:0 0;transform:scaleX(0.9268)">Marketing &amp; Price Adjustment</div>
<div class="t" style="left:535.41px;top:88.66px;line-height:30px;font-size:18px;color:#fff;font-weight:bold;-webkit-text-stroke:0.3px #fff;transform-origin:0 0;transform:scaleX(0.8946)">Reorder Suggestion</div>
<div class="t" style="left:-15.34px;top:88.66px;line-height:30px;font-size:18px;color:#fff;font-weight:bold;-webkit-text-stroke:0.3px #fff;transform-origin:0 0;transform:scaleX(0.8955)">Kits</div>
<div class="t" style="left:-7.94px;top:110.56px;line-height:30px;font-size:12.8px;color:#fff;transform-origin:0 0;transform:scaleX(0.9535)">Calculated</div>
<div class="t" style="left:84.20px;top:110.56px;line-height:30px;font-size:12.8px;color:#fff;transform-origin:0 0;transform:scaleX(0.9535)">Green</div>
<div class="t" style="left:122.60px;top:110.56px;line-height:30px;font-size:12.8px;color:#fff;transform-origin:0 0;transform:scaleX(0.8857)">=</div>
<div class="t" style="left:131.70px;top:110.56px;line-height:30px;font-size:12.8px;color:#fff;transform-origin:0 0;transform:scaleX(1.1091)">Output</div>
<div class="t" style="left:189.57px;top:110.56px;line-height:30px;font-size:12.8px;color:#fff;transform-origin:0 0;transform:scaleX(1.0262)">Do not edit yellow or green cells</div>
</div>
<div style="left:0px;top:1.5px;width:1946px;height:41.0px;background:#ffffff;"></div><div style="left:0px;top:0px;width:1946px;height:1.5px;background:#c9c0a5;"></div><div style="left:0px;top:1.5px;width:97px;height:1.2000000000000002px;background:#d9d9d9;"></div><div style="left:95.5px;top:2px;width:1.5px;height:40.5px;background:#c8c8c8;"></div><div style="left:0px;top:42.5px;width:1946px;height:1.5px;background:#b9b9b9;"></div><div style="left:0px;top:44px;width:1946px;height:2px;background:#ececec;"></div><div style="left:0px;top:46px;width:1946px;height:2px;background:#acacac;"></div><div style="left:0px;top:48px;width:1946px;height:1px;background:#ffffff;"></div><svg style="position:absolute;left:0;top:0" width="300" height="44"><polygon points="83.5,16.8 94,16.8 88.75,8.2" fill="#5f5f5f"/><polygon points="83.5,26 94,26 88.75,34.6" fill="#5f5f5f"/><path d="M122.5,17.7 L136.5,31.3 M136.5,17.7 L122.5,31.3" stroke="#c9c9c9" stroke-width="2.6" fill="none"/><path d="M166.2,25 L173,31.5 L186.3,17.7" stroke="#c9c9c9" stroke-width="2.6" fill="none"/><path d="M234.3,21.6 L239.5,26.8 L244.6,21.6" stroke="#cfcfcf" stroke-width="1.5" fill="none"/><rect x="248.3" y="9.4" width="1.4" height="25.7" fill="#d2d2d2"/><g fill="none" stroke="#2e2e2e" stroke-linecap="round"><path d="M217.6,13.8 C216.6,11.6 213.2,11.3 212.0,15.2 C211.2,18 210.4,24 209.6,29.2 C209.0,33.2 207.2,35.0 204.2,34.0" stroke-width="1.9"/><path d="M206.6,20.5 L215.2,20.5" stroke-width="1.3"/><path d="M215.0,23.2 C216.6,21.8 218.2,22.2 218.7,24.2 L220.2,28.8 C220.8,30.6 222.6,30.8 224.6,29.4" stroke-width="1.6"/><path d="M224.0,22.6 C222.6,21.9 221.6,22.6 220.4,24.2 L216.8,29.0 C216.0,30.1 215.0,30.2 214.4,29.6" stroke-width="1.6"/></g><circle cx="217.4" cy="14.2" r="1.55" fill="#2e2e2e"/><circle cx="203.9" cy="33.7" r="1.55" fill="#2e2e2e"/><circle cx="224.0" cy="22.9" r="1.2" fill="#2e2e2e"/><circle cx="214.6" cy="29.4" r="1.2" fill="#2e2e2e"/></svg><div style="left:251px;top:7.4px;width:1700px;height:31.4px;border-top:1px solid #e0e0e0;border-bottom:1px solid #e0e0e0;background:#fdfdfd"></div><div style="left:450px;top:23.2px;width:18px;height:1.6px;background:#111"></div><div style="left:669.5px;top:23.2px;width:18px;height:1.6px;background:#111"></div><div style="left:822.0px;top:15.7px;width:1.8px;height:18.1px;background:#111"></div><div style="left:922.40px;top:21.6px;width:2.6px;height:2.6px;border-radius:50%;background:#222"></div><div style="left:1080.70px;top:21.6px;width:2.6px;height:2.6px;border-radius:50%;background:#222"></div><div style="left:1365.40px;top:21.6px;width:2.6px;height:2.6px;border-radius:50%;background:#222"></div><div style="left:0px;top:49px;width:1946px;height:29px;background:#f0f0f0;"></div><div style="left:1746.6px;top:49px;width:199.4000000000001px;height:32.5px;background:#f7f7f7;background:linear-gradient(#fbfbfb,#f3f3f3);"></div><div style="left:0px;top:78px;width:1746.6px;height:1.2000000000000028px;background:#ffffff;"></div><div style="left:0px;top:79.2px;width:1748.8px;height:3.299999999999997px;background:#1b6d3b;"></div><div style="left:0px;top:82.5px;width:1746.2px;height:1.9000000000000057px;background:#ffffff;"></div><div style="left:1746.6px;top:80.8px;width:199.4000000000001px;height:1.0px;background:#c4c4c4;"></div><div style="left:47.80px;top:49px;width:1px;height:29px;background:#dadada"></div><div class="t" style="left:-27.95px;width:76.25px;text-align:center;top:49.43px;line-height:30px;font-size:15.5px;color:#1b7340;-webkit-text-stroke:0.35px #1b7340;">Q</div><div style="left:124.05px;top:49px;width:1px;height:29px;background:#dadada"></div><div class="t" style="left:48.30px;width:76.25px;text-align:center;top:49.43px;line-height:30px;font-size:15.5px;color:#1b7340;-webkit-text-stroke:0.35px #1b7340;">R</div><div style="left:200.30px;top:49px;width:1px;height:29px;background:#dadada"></div><div class="t" style="left:124.55px;width:76.25px;text-align:center;top:49.43px;line-height:30px;font-size:15.5px;color:#1b7340;-webkit-text-stroke:0.35px #1b7340;">S</div><div style="left:276.55px;top:49px;width:1px;height:29px;background:#dadada"></div><div class="t" style="left:200.80px;width:76.25px;text-align:center;top:49.43px;line-height:30px;font-size:15.5px;color:#1b7340;-webkit-text-stroke:0.35px #1b7340;">T</div><div style="left:352.80px;top:49px;width:1px;height:29px;background:#dadada"></div><div class="t" style="left:277.05px;width:76.25px;text-align:center;top:49.43px;line-height:30px;font-size:15.5px;color:#1b7340;-webkit-text-stroke:0.35px #1b7340;">U</div><div style="left:429.05px;top:49px;width:1px;height:29px;background:#dadada"></div><div class="t" style="left:353.30px;width:76.25px;text-align:center;top:49.43px;line-height:30px;font-size:15.5px;color:#1b7340;-webkit-text-stroke:0.35px #1b7340;">V</div><div style="left:505.30px;top:49px;width:1px;height:29px;background:#dadada"></div><div class="t" style="left:429.55px;width:76.25px;text-align:center;top:49.43px;line-height:30px;font-size:15.5px;color:#1b7340;-webkit-text-stroke:0.35px #1b7340;">W</div><div style="left:601.20px;top:49px;width:1px;height:29px;background:#dadada"></div><div class="t" style="left:505.80px;width:95.90px;text-align:center;top:49.43px;line-height:30px;font-size:15.5px;color:#1b7340;-webkit-text-stroke:0.35px #1b7340;">X</div><div style="left:696.80px;top:49px;width:1px;height:29px;background:#dadada"></div><div class="t" style="left:601.70px;width:95.60px;text-align:center;top:49.43px;line-height:30px;font-size:15.5px;color:#1b7340;-webkit-text-stroke:0.35px #1b7340;">Y</div><div style="left:773.06px;top:49px;width:1px;height:29px;background:#dadada"></div><div class="t" style="left:697.30px;width:76.26px;text-align:center;top:49.43px;line-height:30px;font-size:15.5px;color:#1b7340;-webkit-text-stroke:0.35px #1b7340;">Z</div><div style="left:849.32px;top:49px;width:1px;height:29px;background:#dadada"></div><div class="t" style="left:773.56px;width:76.26px;text-align:center;top:49.43px;line-height:30px;font-size:15.5px;color:#1b7340;-webkit-text-stroke:0.35px #1b7340;">AA</div><div style="left:925.58px;top:49px;width:1px;height:29px;background:#dadada"></div><div class="t" style="left:849.82px;width:76.26px;text-align:center;top:49.43px;line-height:30px;font-size:15.5px;color:#1b7340;-webkit-text-stroke:0.35px #1b7340;">AB</div><div style="left:1001.84px;top:49px;width:1px;height:29px;background:#dadada"></div><div class="t" style="left:926.08px;width:76.26px;text-align:center;top:49.43px;line-height:30px;font-size:15.5px;color:#1b7340;-webkit-text-stroke:0.35px #1b7340;">AC</div><div style="left:1078.10px;top:49px;width:1px;height:29px;background:#dadada"></div><div class="t" style="left:1002.34px;width:76.26px;text-align:center;top:49.43px;line-height:30px;font-size:15.5px;color:#1b7340;-webkit-text-stroke:0.35px #1b7340;">AD</div><div style="left:1154.36px;top:49px;width:1px;height:29px;background:#dadada"></div><div class="t" style="left:1078.60px;width:76.26px;text-align:center;top:49.43px;line-height:30px;font-size:15.5px;color:#1b7340;-webkit-text-stroke:0.35px #1b7340;">AE</div><div style="left:1230.62px;top:49px;width:1px;height:29px;background:#dadada"></div><div class="t" style="left:1154.86px;width:76.26px;text-align:center;top:49.43px;line-height:30px;font-size:15.5px;color:#1b7340;-webkit-text-stroke:0.35px #1b7340;">AF</div><div style="left:1306.88px;top:49px;width:1px;height:29px;background:#dadada"></div><div class="t" style="left:1231.12px;width:76.26px;text-align:center;top:49.43px;line-height:30px;font-size:15.5px;color:#1b7340;-webkit-text-stroke:0.35px #1b7340;">AG</div><div style="left:1383.14px;top:49px;width:1px;height:29px;background:#dadada"></div><div class="t" style="left:1307.38px;width:76.26px;text-align:center;top:49.43px;line-height:30px;font-size:15.5px;color:#1b7340;-webkit-text-stroke:0.35px #1b7340;">AH</div><div style="left:1459.40px;top:49px;width:1px;height:29px;background:#dadada"></div><div class="t" style="left:1383.64px;width:76.26px;text-align:center;top:49.43px;line-height:30px;font-size:15.5px;color:#1b7340;-webkit-text-stroke:0.35px #1b7340;">AI</div><div style="left:1535.66px;top:49px;width:1px;height:29px;background:#dadada"></div><div class="t" style="left:1459.90px;width:76.26px;text-align:center;top:49.43px;line-height:30px;font-size:15.5px;color:#1b7340;-webkit-text-stroke:0.35px #1b7340;">AJ</div><div style="left:1611.92px;top:49px;width:1px;height:29px;background:#dadada"></div><div class="t" style="left:1536.16px;width:76.26px;text-align:center;top:49.43px;line-height:30px;font-size:15.5px;color:#1b7340;-webkit-text-stroke:0.35px #1b7340;">AK</div><div style="left:1746.10px;top:49px;width:1px;height:29px;background:#dadada"></div><div class="t" style="left:1612.70px;width:133.90px;text-align:center;top:49.43px;line-height:30px;font-size:15.5px;color:#1b7340;-webkit-text-stroke:0.35px #1b7340;">AL</div><div style="left:1828.70px;top:49px;width:1px;height:32px;background:#dadada"></div><div class="t" style="left:1746.60px;width:82.60px;text-align:center;top:49.43px;line-height:30px;font-size:15.5px;color:#474747;">AM</div><div style="left:1911.30px;top:49px;width:1px;height:32px;background:#dadada"></div><div class="t" style="left:1829.20px;width:82.60px;text-align:center;top:49.43px;line-height:30px;font-size:15.5px;color:#474747;">AN</div><div style="left:1993.90px;top:49px;width:1px;height:32px;background:#dadada"></div><div class="t" style="left:1911.80px;width:82.60px;text-align:center;top:49.43px;line-height:30px;font-size:15.5px;color:#474747;">AO</div><div class="t" style="left:260.55px;top:7.62px;line-height:30px;font-size:21px;color:#000;transform-origin:0 0;transform:scaleX(0.9516)">Demand Forecasting</div><div class="t" style="left:474.27px;top:7.62px;line-height:30px;font-size:21px;color:#000;transform-origin:0 0;transform:scaleX(0.9304)">12-Month Rolling v3.0</div><div class="t" style="left:693.76px;top:7.62px;line-height:30px;font-size:21px;color:#000;transform-origin:0 0;transform:scaleX(0.9360)">Decision Kits</div><div class="t" style="left:838.63px;top:7.62px;line-height:30px;font-size:21px;color:#000;transform-origin:0 0;transform:scaleX(0.8688)">15 SKUs</div><div class="t" style="left:936.60px;top:7.62px;line-height:30px;font-size:21px;color:#000;transform-origin:0 0;transform:scaleX(0.9093)">Seasonal Index</div><div class="t" style="left:1094.96px;top:7.62px;line-height:30px;font-size:21px;color:#000;transform-origin:0 0;transform:scaleX(0.9363)">Marketing &amp; Price Adjustment</div><div class="t" style="left:1379.39px;top:7.62px;line-height:30px;font-size:21px;color:#000;transform-origin:0 0;transform:scaleX(0.9119)">Reorder Suggestion</div>
<div style="left:0;top:83.2px;width:1746.2px;height:1.2px;background:#fff"></div><div style="left:1744px;top:83.2px;width:2.2px;height:31px;background:#fff"></div><div style="left:0;top:112.5px;width:1746.2px;height:1.5px;background:#fff"></div><div style="left:1746.2px;top:79.6px;width:2.6px;height:36px;background:#1b6d3b"></div><div style="left:0;top:114px;width:1748.8px;height:3.2px;background:#1b6d3b"></div><div style="left:1741.6px;top:110.9px;width:8.8px;height:8.2px;background:#1b6d3b;box-shadow:0 0 0 1px #fff"></div>
</div></body></html>
